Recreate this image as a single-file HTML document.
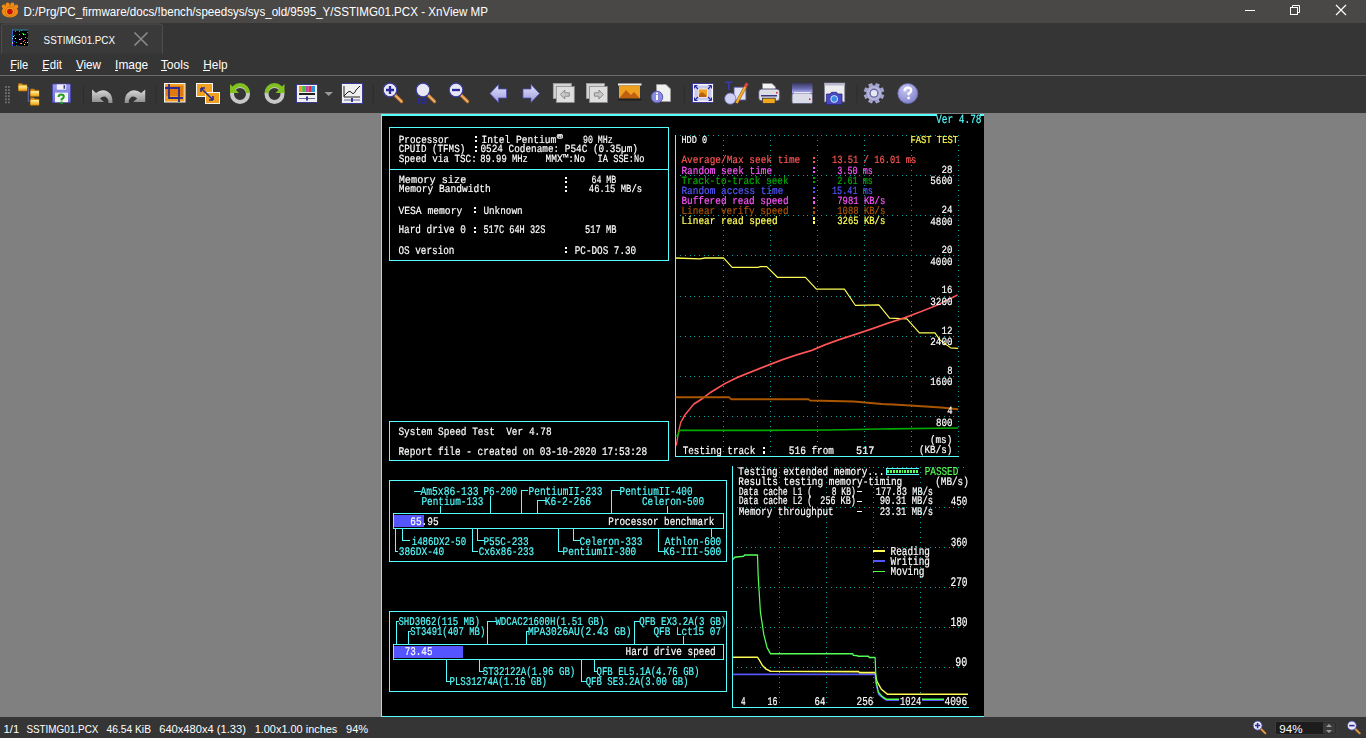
<!DOCTYPE html>
<html><head><meta charset="utf-8">
<style>
html,body{margin:0;padding:0;width:1366px;height:738px;overflow:hidden;background:#353535;}
#root{position:relative;width:1366px;height:738px;}
svg text{font-family:"Liberation Sans",sans-serif;}
#pcx text{font-family:"Liberation Mono",monospace;white-space:pre;stroke-width:0.15px;text-rendering:geometricPrecision;}
</style></head><body><div id="root">
<svg width="1366" height="738" viewBox="0 0 1366 738" style="position:absolute;left:0;top:0">
<!-- title bar -->
<rect x="0" y="0" width="1366" height="23" fill="#4a4846"/>
<rect x="0" y="23" width="1366" height="90" fill="#353535"/>
<!-- logo -->
<g>
 <g fill="#f28a12">
  <circle cx="3.8" cy="6.6" r="2"/><circle cx="7.6" cy="4.4" r="2"/><circle cx="12.3" cy="4.4" r="2"/><circle cx="16.2" cy="6.6" r="2"/>
  <ellipse cx="9.9" cy="11.4" rx="8.1" ry="6.2"/>
 </g>
 <circle cx="9.9" cy="11.6" r="4.6" fill="#f7a21c" stroke="#a85a10" stroke-width="0.6"/>
 <circle cx="9.9" cy="11.6" r="2.9" fill="#c80e0a"/>
</g>
<text x="23.5" y="16.3" font-size="13" fill="#ffffff" textLength="464.5" lengthAdjust="spacingAndGlyphs">D:/Prg/PC_firmware/docs/!bench/speedsys/sys_old/9595_Y/SSTIMG01.PCX - XnView MP</text>
<!-- window controls -->
<rect x="1245" y="10" width="10" height="1" fill="#fff"/>
<g fill="none" stroke="#fff" stroke-width="1">
 <rect x="1290.5" y="7.5" width="7" height="7"/>
 <path d="M1292.5 7.5 V5.5 H1299.5 V12.5 H1297.5"/>
 <path d="M1336 5 L1346 15 M1346 5 L1336 15" stroke-width="1.2"/>
</g>
<!-- tab -->
<path d="M1.5 53.5 V26.5 Q1.5 24 4 24 H160 Q162.5 24 162.5 26.5 V53.5" fill="#3a3a3a" stroke="#4e4e4e"/>
<rect x="12" y="29.5" width="16" height="16.5" fill="#000"/>
<rect x="12" y="29.5" width="16" height="1" fill="#3aa0c0"/>
<rect x="12" y="29.5" width="1" height="16.5" fill="#3a60c0"/>
<rect x="19" y="34" width="1" height="1" fill="#ff55ff"/>
<rect x="27" y="32" width="1" height="1" fill="#00aaaa"/>
<rect x="27" y="38" width="1" height="1" fill="#00aa00"/>
<rect x="18" y="45" width="1" height="1" fill="#0000aa"/>
<rect x="24" y="34" width="1" height="1" fill="#00aa00"/>
<rect x="16" y="42" width="1" height="1" fill="#00aaaa"/>
<rect x="14" y="35" width="1" height="1" fill="#00aaaa"/>
<rect x="21" y="30" width="1" height="1" fill="#ff5555"/>
<rect x="27" y="42" width="1" height="1" fill="#ffff55"/>
<rect x="24" y="44" width="1" height="1" fill="#55ffff"/>
<rect x="23" y="33" width="1" height="1" fill="#00aaaa"/>
<rect x="16" y="45" width="1" height="1" fill="#00aa00"/>
<rect x="20" y="43" width="1" height="1" fill="#ff5555"/>
<rect x="25" y="42" width="1" height="1" fill="#ff55ff"/>
<rect x="25" y="37" width="1" height="1" fill="#ff55ff"/>
<rect x="12" y="38" width="1" height="1" fill="#55ffff"/>
<rect x="22" y="33" width="1" height="1" fill="#00aa00"/>
<rect x="20" y="39" width="1" height="1" fill="#5555ff"/>
<rect x="14" y="45" width="1" height="1" fill="#0000aa"/>
<rect x="14" y="41" width="1" height="1" fill="#5555ff"/>
<rect x="25" y="34" width="1" height="1" fill="#00aaaa"/>
<rect x="21" y="43" width="1" height="1" fill="#ffff55"/>
<rect x="15" y="31" width="1" height="1" fill="#00aaaa"/>
<rect x="24" y="40" width="1" height="1" fill="#ff5555"/>
<rect x="19" y="31" width="1" height="1" fill="#ff5555"/>
<rect x="12" y="32" width="1" height="1" fill="#5555ff"/>
<rect x="13" y="36" width="1" height="1" fill="#ffff55"/>
<rect x="21" y="38" width="1" height="1" fill="#55ffff"/>
<rect x="13" y="40" width="1" height="1" fill="#ff55ff"/>
<rect x="23" y="34" width="1" height="1" fill="#ffff55"/>
<rect x="24" y="44" width="1" height="1" fill="#ffff55"/>
<rect x="15" y="38" width="1" height="1" fill="#ffff55"/>
<rect x="19" y="39" width="1" height="1" fill="#ffff55"/>
<rect x="20" y="39" width="1" height="1" fill="#ff55ff"/>
<rect x="12" y="43" width="1" height="1" fill="#ff55ff"/>
<rect x="12" y="42" width="1" height="1" fill="#55ffff"/>
<rect x="13" y="40" width="1" height="1" fill="#0000aa"/>
<rect x="23" y="41" width="1" height="1" fill="#ff5555"/>
<text x="43.6" y="43.8" font-size="10.6" fill="#ffffff" textLength="71.4" lengthAdjust="spacingAndGlyphs">SSTIMG01.PCX</text>
<path d="M134.5 32.5 L147.5 45.5 M147.5 32.5 L134.5 45.5" stroke="#8a8a8a" stroke-width="1.6"/>
<!-- menu -->
<g font-size="13" fill="#ffffff">
<text x="10.2" y="69" textLength="17.9" lengthAdjust="spacingAndGlyphs">File</text>
<text x="42.2" y="69" textLength="19.7" lengthAdjust="spacingAndGlyphs">Edit</text>
<text x="75.9" y="69" textLength="25.1" lengthAdjust="spacingAndGlyphs">View</text>
<text x="115.1" y="69" textLength="33.1" lengthAdjust="spacingAndGlyphs">Image</text>
<text x="160.8" y="69" textLength="28.2" lengthAdjust="spacingAndGlyphs">Tools</text>
<text x="203.3" y="69" textLength="24.3" lengthAdjust="spacingAndGlyphs">Help</text>
</g>
<g fill="#ffffff">
<rect x="10" y="70" width="6" height="1"/><rect x="42" y="70" width="6" height="1"/><rect x="76" y="70" width="6" height="1"/>
<rect x="115" y="70" width="3" height="1"/><rect x="161" y="70" width="6" height="1"/><rect x="203" y="70" width="7" height="1"/>
</g>
<rect x="0" y="75" width="1366" height="1" fill="#6e6e6e"/>
<defs><linearGradient id="gfold" x1="0" y1="0" x2="0" y2="1"><stop offset="0" stop-color="#fff2a0"/><stop offset="1" stop-color="#f0a818"/></linearGradient><linearGradient id="gundo" x1="0" y1="0" x2="0" y2="1"><stop offset="0" stop-color="#d8d8d8"/><stop offset="1" stop-color="#8c8c8c"/></linearGradient><linearGradient id="gsave" x1="0" y1="0" x2="0" y2="1"><stop offset="0" stop-color="#9a9aee"/><stop offset="1" stop-color="#6a6ad8"/></linearGradient></defs>
<rect x="5" y="86.0" width="1.8" height="1.8" fill="#727272"/>
<rect x="8" y="86.0" width="1.8" height="1.8" fill="#727272"/>
<rect x="5" y="89.1" width="1.8" height="1.8" fill="#727272"/>
<rect x="8" y="89.1" width="1.8" height="1.8" fill="#727272"/>
<rect x="5" y="92.2" width="1.8" height="1.8" fill="#727272"/>
<rect x="8" y="92.2" width="1.8" height="1.8" fill="#727272"/>
<rect x="5" y="95.3" width="1.8" height="1.8" fill="#727272"/>
<rect x="8" y="95.3" width="1.8" height="1.8" fill="#727272"/>
<rect x="5" y="98.4" width="1.8" height="1.8" fill="#727272"/>
<rect x="8" y="98.4" width="1.8" height="1.8" fill="#727272"/>
<rect x="5" y="101.5" width="1.8" height="1.8" fill="#727272"/>
<rect x="8" y="101.5" width="1.8" height="1.8" fill="#727272"/>
<rect x="83" y="85.5" width="1" height="18" fill="#2c2c2c"/>
<rect x="155.5" y="85.5" width="1" height="18" fill="#2c2c2c"/>
<rect x="372.8" y="85.5" width="1" height="18" fill="#2c2c2c"/>
<rect x="683.8" y="85.5" width="1" height="18" fill="#2c2c2c"/>
<rect x="856.5" y="85.5" width="1" height="18" fill="#2c2c2c"/>
<path d="M28.3 87.5 V101.5 M26.5 87.5 H28.3 M28.3 93 H29.5 M28.3 101.3 H29.5" stroke="#6a70d0" stroke-width="0.9" fill="none"/>
<path d="M18.5 83.5 h3.5 l1 1.2 h4 v6.3 h-8.5 z" fill="#d89010" stroke="#a86a10" stroke-width="0.7"/><rect x="18.5" y="85.6" width="8.5" height="4.8" fill="url(#gfold)"/>
<path d="M30.5 89.0 h3.5 l1 1.2 h4 v6.3 h-8.5 z" fill="#d89010" stroke="#a86a10" stroke-width="0.7"/><rect x="30.5" y="91.1" width="8.5" height="4.8" fill="url(#gfold)"/>
<path d="M30.5 97.8 h3.5 l1 1.2 h4 v6.3 h-8.5 z" fill="#d89010" stroke="#a86a10" stroke-width="0.7"/><rect x="30.5" y="99.89999999999999" width="8.5" height="4.8" fill="url(#gfold)"/>
<path d="M52.5 85 Q52.5 84 53.5 84 H69.5 Q70.5 84 70.5 85 V102.5 H52.5 Z" fill="url(#gsave)" stroke="#4848b0" stroke-width="0.8"/>
<rect x="56.8" y="84.4" width="9.4" height="5.3" fill="#f0f0f8"/><rect x="63.5" y="85.2" width="1.6" height="3.6" fill="#404080"/>
<rect x="55" y="92.6" width="13" height="9.6" fill="#f4f4f4"/>
<path d="M58.6 97 Q58.6 94.5 61.2 94.5 Q63.8 94.5 63.8 96.8 Q63.8 98.3 61.6 99.2 V100.4" fill="none" stroke="#20a020" stroke-width="2"/><rect x="60.5" y="101.6" width="2.3" height="2.3" fill="#20a020"/>
<path d="M92 89.5 L92 102 L104 102 L100 98.5 Q104 95 107 98 Q109 100 108.5 103 L112.5 103 Q113 95 107.5 91.5 Q101.5 88.5 96 93 Z" fill="url(#gundo)"/>
<path d="M145.2 89.5 L145.2 102 L133.2 102 L137.2 98.5 Q133.2 95 130.2 98 Q128.2 100 128.7 103 L124.7 103 Q124.2 95 129.7 91.5 Q135.7 88.5 141.2 93 Z" fill="url(#gundo)"/>
<rect x="164.5" y="83.5" width="20.5" height="18.5" fill="#f0a020" stroke="#f4f4f4"/>
<rect x="166" y="86" width="17" height="10" fill="#e07a10"/>
<path d="M169 84 V98 H183 M165 88 H179 V102" stroke="#2a2a90" stroke-width="1.8" fill="none"/>
<rect x="196.5" y="83.5" width="16" height="13" fill="#f0a020" stroke="#f4f4f4"/>
<rect x="205.5" y="92.5" width="14" height="11" fill="#f0a020" stroke="#f4f4f4"/>
<path d="M201 88 L213 100 M201 88 h4 M201 88 v4 M213 100 h-4 M213 100 v-4" stroke="#2a2a90" stroke-width="1.6"/>
<circle cx="240" cy="94" r="8" fill="none" stroke="#c8c8c8" stroke-width="4"/>
<path d="M232 93 A8 8 0 0 1 248 93" fill="none" stroke="#80c020" stroke-width="4"/>
<path d="M230 84 L230 93 L239 93 Z" fill="#80c020"/>
<circle cx="274.5" cy="94" r="8" fill="none" stroke="#c8c8c8" stroke-width="4"/>
<path d="M266.5 93 A8 8 0 0 1 282.5 93" fill="none" stroke="#80c020" stroke-width="4"/>
<path d="M284.5 84 L284.5 93 L275.5 93 Z" fill="#80c020"/>
<rect x="296.5" y="84.5" width="21" height="18" fill="#f0f0f0" stroke="#3a3a90"/>
<rect x="299.0" y="86" width="3.2" height="6" fill="#f0a020"/>
<rect x="302.2" y="86" width="3.2" height="6" fill="#40c040"/>
<rect x="305.4" y="86" width="3.2" height="6" fill="#c040c0"/>
<rect x="308.6" y="86" width="3.2" height="6" fill="#e03030"/>
<rect x="311.8" y="86" width="3.2" height="6" fill="#3090e0"/>
<rect x="299" y="93" width="16" height="2" fill="#202020"/>
<rect x="299" y="98" width="16" height="1" fill="#6a6a9a"/><rect x="306" y="96.5" width="2" height="4" fill="#3a3a90"/>
<path d="M324.5 92 L333 92 L328.75 96 Z" fill="#9a9a9a"/>
<rect x="341.5" y="83.5" width="21" height="20" fill="#f0f0f0" stroke="#3a3a90"/>
<path d="M344 96 L348 92 Q350 90 352 93 Q354 95 356 90 L360 86 M344 86 V97 H360" stroke="#202020" fill="none"/>
<rect x="344" y="99.5" width="16" height="1" fill="#6a6a9a"/><rect x="351" y="98" width="2" height="4" fill="#3a3a90"/>
<g>
<path d="M394.20000000000005 94.19999999999999 L401.55 101.55" stroke="#c8782a" stroke-width="3.3600000000000003" stroke-linecap="round"/>
<path d="M394.20000000000005 94.19999999999999 L401.55 101.55" stroke="#f0c080" stroke-width="1.26" stroke-linecap="round"/>
<circle cx="390.0" cy="90.0" r="6.825" fill="#e8e8f4" stroke="#3a3aa0" stroke-width="1.26"/>
<path d="M386.01000000000005 90.0 H393.99 M390.0 86.00999999999999 V93.99" stroke="#2a2a9a" stroke-width="2.3100000000000005"/>
</g>
<g>
<path d="M427.20000000000005 94.19999999999999 L434.55 101.55" stroke="#c8782a" stroke-width="3.3600000000000003" stroke-linecap="round"/>
<path d="M427.20000000000005 94.19999999999999 L434.55 101.55" stroke="#f0c080" stroke-width="1.26" stroke-linecap="round"/>
<circle cx="423.0" cy="90.0" r="6.825" fill="#e8e8f4" stroke="#3a3aa0" stroke-width="1.26"/>

</g>
<path d="M418.2 98 h2 v5.8 h-2 z M417 99 l1.2 -1 v1.6 z M421.4 99.6 h1.6 v1.5 h-1.6 z M421.4 102.3 h1.6 v1.5 h-1.6 z M424.4 98 h2 v5.8 h-2 z M423.2 99 l1.2 -1 v1.6 z" fill="#2a2aa8"/>
<g>
<path d="M460.20000000000005 94.19999999999999 L467.55 101.55" stroke="#c8782a" stroke-width="3.3600000000000003" stroke-linecap="round"/>
<path d="M460.20000000000005 94.19999999999999 L467.55 101.55" stroke="#f0c080" stroke-width="1.26" stroke-linecap="round"/>
<circle cx="456.0" cy="90.0" r="6.825" fill="#e8e8f4" stroke="#3a3aa0" stroke-width="1.26"/>
<path d="M452.01000000000005 90.0 H459.99" stroke="#2a2a9a" stroke-width="2.3100000000000005"/>
</g>
<defs><linearGradient id="garr" x1="0" y1="0" x2="0" y2="1"><stop offset="0" stop-color="#e4e4fa"/><stop offset="1" stop-color="#9a9ae0"/></linearGradient></defs>
<path d="M490 93.5 L498.5 84.5 V89 H506.5 V98 H498.5 V102.5 Z" fill="url(#garr)" stroke="#5050b0" stroke-width="0.8"/>
<path d="M539.5 93.5 L531 84.5 V89 H523 V98 H531 V102.5 Z" fill="url(#garr)" stroke="#5050b0" stroke-width="0.8"/>
<rect x="553.3" y="83.5" width="18" height="15" fill="#d4d4d4" stroke="#a0a0a0" stroke-width="0.8"/>
<rect x="556.3" y="86.5" width="18" height="16" fill="#dedede" stroke="#8a8a8a" stroke-width="0.8"/>
<path d="M560.3 94.5 L564.8 90 V92.8 H569.3 V96.2 H564.8 V99 Z" fill="#c8c8c8" stroke="#7a7a7a" stroke-width="0.8"/>
<rect x="586.4" y="83.5" width="18" height="15" fill="#d4d4d4" stroke="#a0a0a0" stroke-width="0.8"/>
<rect x="589.4" y="86.5" width="18" height="16" fill="#dedede" stroke="#8a8a8a" stroke-width="0.8"/>
<path d="M603.4 94.5 L598.9 90 V92.8 H594.4 V96.2 H598.9 V99 Z" fill="#c8c8c8" stroke="#7a7a7a" stroke-width="0.8"/>
<rect x="618" y="83.5" width="23.5" height="2" fill="#f0f0f0"/>
<rect x="619" y="85.5" width="21" height="13" fill="#f0a020"/>
<path d="M619 98.5 L626 90 L631 95 L634 92 L640 98.5 Z" fill="#c06010"/>
<rect x="618" y="98.5" width="23.5" height="2" fill="#202020"/>
<path d="M656.5 84.5 H666 L670.5 89 V101.5 H656.5 Z" fill="#f0f0f0" stroke="#9a9a9a"/>
<circle cx="657" cy="97" r="5.8" fill="#8a8ae0" stroke="#5a5ab0"/>
<rect x="656" y="95" width="2" height="5" fill="#fff"/><rect x="656" y="92.5" width="2" height="1.6" fill="#fff"/>
<rect x="692.5" y="83.5" width="21" height="19" fill="#f8f8f8" stroke="#3a3a98"/>
<rect x="694.5" y="85.5" width="17" height="15" fill="#c8c8f0"/>
<rect x="698.3" y="89" width="9.2" height="8.2" fill="#f0a020" stroke="#f8f8f8" stroke-width="0.8"/>
<path d="M699 94.5 L702 92 L706 95 V97 H699Z" fill="#b86010"/>
<path d="M695 86 L698 89 M711 86 L708 89 M695 100 L698 97 M711 100 L708 97" stroke="#2a2aa0" stroke-width="1.2"/>
<path d="M694.5 85.5 h3 M694.5 85.5 v3 M711.5 85.5 h-3 M711.5 85.5 v3 M694.5 100.5 h3 M694.5 100.5 v-3 M711.5 100.5 h-3 M711.5 100.5 v-3" stroke="#2a2aa0" stroke-width="1"/>
<rect x="734" y="87.2" width="11.9" height="12.8" fill="#e0e0f8" stroke="#5a5ab0" stroke-width="0.8"/>
<circle cx="730.3" cy="98.6" r="5.6" fill="#d0d0f4" stroke="#6a6ac0" stroke-width="0.8"/>
<path d="M725 82.2 H732.5 M728.75 82.2 V89.9" stroke="#3a3aa8" stroke-width="1.6"/>
<path d="M736.5 103 L745.5 86.5" stroke="#a06010" stroke-width="3.2"/><path d="M736.5 103 L745.5 86.5" stroke="#f0b030" stroke-width="2"/><path d="M745 87 L747.3 83.2" stroke="#e04040" stroke-width="3"/>
<path d="M762.5 83.5 H772 L775.5 87 V91 H762.5 Z" fill="#f4f4f4" stroke="#8a8a8a" stroke-width="0.8"/>
<rect x="758.7" y="89" width="21" height="11.9" rx="3" fill="#dcdce4" stroke="#4a4a6a" stroke-width="0.9"/>
<rect x="761" y="95" width="16" height="1.5" fill="#3a3a80"/>
<rect x="762.4" y="98.2" width="12.8" height="5.4" fill="#f0a818" stroke="#303030" stroke-width="0.8"/>
<rect x="776" y="92" width="1.5" height="1.5" fill="#d02020"/>
<defs><linearGradient id="gscan" x1="0" y1="0" x2="0" y2="1"><stop offset="0" stop-color="#383860"/><stop offset="0.5" stop-color="#6a6ab0"/><stop offset="1" stop-color="#c0c0ff"/></linearGradient></defs>
<rect x="792" y="83" width="20.5" height="11" rx="1" fill="url(#gscan)"/>
<rect x="792" y="93.5" width="20.5" height="10" rx="1.5" fill="#dcdce8" stroke="#5a5a7a" stroke-width="0.8"/>
<rect x="794" y="92" width="16.5" height="1.5" fill="#e8e8ff"/><rect x="809" y="98.5" width="1.5" height="1.5" fill="#d02020"/>
<rect x="824.6" y="83.1" width="20.1" height="18.7" fill="#ececec" stroke="#8a8a9a" stroke-width="0.8"/>
<rect x="824.6" y="83.1" width="20.1" height="2.4" fill="#b8b8d0"/>
<path d="M826.4 94 H830 L831.5 92.3 H836.5 L838 94 H842 V104.5 H826.4 Z" fill="#4848c0" stroke="#2a2a80" stroke-width="0.8"/>
<circle cx="834.2" cy="99" r="3.4" fill="#3a8ae0" stroke="#e8e8ff" stroke-width="0.9"/>
<rect x="871.9" y="82.9" width="4.2" height="4" fill="#a6a6d2" transform="rotate(22.5 874 93.2)"/>
<rect x="871.9" y="82.9" width="4.2" height="4" fill="#a6a6d2" transform="rotate(67.5 874 93.2)"/>
<rect x="871.9" y="82.9" width="4.2" height="4" fill="#a6a6d2" transform="rotate(112.5 874 93.2)"/>
<rect x="871.9" y="82.9" width="4.2" height="4" fill="#a6a6d2" transform="rotate(157.5 874 93.2)"/>
<rect x="871.9" y="82.9" width="4.2" height="4" fill="#a6a6d2" transform="rotate(202.5 874 93.2)"/>
<rect x="871.9" y="82.9" width="4.2" height="4" fill="#a6a6d2" transform="rotate(247.5 874 93.2)"/>
<rect x="871.9" y="82.9" width="4.2" height="4" fill="#a6a6d2" transform="rotate(292.5 874 93.2)"/>
<rect x="871.9" y="82.9" width="4.2" height="4" fill="#a6a6d2" transform="rotate(337.5 874 93.2)"/>
<circle cx="874" cy="93.2" r="7.6" fill="#b4b4dc" stroke="#8888bb" stroke-width="0.6"/><circle cx="874" cy="93.2" r="4.6" fill="#6a6aa0"/><circle cx="874" cy="93.2" r="3.2" fill="#e8e8f4"/>
<defs><radialGradient id="ghelp" cx="0.4" cy="0.3" r="0.8"><stop offset="0" stop-color="#c8c8f4"/><stop offset="1" stop-color="#7a7ac8"/></radialGradient></defs>
<circle cx="907.8" cy="93.5" r="10" fill="url(#ghelp)" stroke="#6a6ab0" stroke-width="0.8"/>
<path d="M904.6 91.2 Q904.6 87.6 907.9 87.6 Q911.2 87.6 911.2 90.6 Q911.2 92.3 908.6 93.5 V95.2" fill="none" stroke="#ffffff" stroke-width="2.2"/><rect x="907.4" y="96.8" width="2.4" height="2.4" fill="#fff"/>
<!-- canvas -->
<rect x="0" y="113" width="1366" height="604" fill="#808080"/>
<!-- status bar -->
<rect x="0" y="717" width="1366" height="21" fill="#353535"/>
<g font-size="10.8" fill="#ffffff">
<text x="3.5" y="733.4" textLength="15.8" lengthAdjust="spacingAndGlyphs">1/1</text>
<text x="26.4" y="733.4" textLength="72" lengthAdjust="spacingAndGlyphs">SSTIMG01.PCX</text>
<text x="106.5" y="733.4" textLength="44.5" lengthAdjust="spacingAndGlyphs">46.54 KiB</text>
<text x="159.2" y="733.4" textLength="86.8" lengthAdjust="spacingAndGlyphs">640x480x4 (1.33)</text>
<text x="254.7" y="733.4" textLength="82.6" lengthAdjust="spacingAndGlyphs">1.00x1.00 inches</text>
<text x="346" y="733.4" textLength="22.2" lengthAdjust="spacingAndGlyphs">94%</text>
</g>
<rect x="1275.5" y="721.5" width="60.5" height="13" rx="2" fill="#1c1c1c" stroke="#3c3c3c"/>
<text x="1279.3" y="733" font-size="10.8" fill="#ffffff" textLength="23.2" lengthAdjust="spacingAndGlyphs">94%</text>
<rect x="1323" y="722.5" width="12" height="11" fill="#3a3a3a"/>
<path d="M1326 727 L1329 724 L1332 727 Z M1326 730 L1329 733 L1332 730 Z" fill="#9a9a9a"/>
<g>
<path d="M1260.4 728.4 L1265.3 733.3" stroke="#c8782a" stroke-width="2.2399999999999998" stroke-linecap="round"/>
<path d="M1260.4 728.4 L1265.3 733.3" stroke="#f0c080" stroke-width="0.84" stroke-linecap="round"/>
<circle cx="1257.6" cy="725.6" r="4.55" fill="#e8e8f4" stroke="#3a3aa0" stroke-width="0.84"/>
<path d="M1254.94 725.6 H1260.26 M1257.6 722.94 V728.26" stroke="#2a2a9a" stroke-width="1.54"/>
</g>
<g>
<path d="M1354.7 728.4 L1359.6 733.3" stroke="#c8782a" stroke-width="2.2399999999999998" stroke-linecap="round"/>
<path d="M1354.7 728.4 L1359.6 733.3" stroke="#f0c080" stroke-width="0.84" stroke-linecap="round"/>
<circle cx="1351.8999999999999" cy="725.6" r="4.55" fill="#e8e8f4" stroke="#3a3aa0" stroke-width="0.84"/>
<path d="M1349.24 725.6 H1354.56" stroke="#2a2a9a" stroke-width="1.54"/>
</g>
</svg>
<svg width="603" height="603" viewBox="381 114 603 603" style="position:absolute;left:381px;top:114px;will-change:transform">
<rect x="381" y="114" width="603" height="603" fill="#000"/>
<g shape-rendering="crispEdges">
<rect x="381" y="114" width="603" height="2" fill="#55FFFF"/>
<rect x="381" y="114" width="1" height="603" fill="#55FFFF"/>
<rect x="381" y="716" width="603" height="1" fill="#55FFFF"/>
<rect x="389" y="127" width="280" height="1" fill="#55FFFF"/>
<rect x="389" y="260" width="280" height="1" fill="#55FFFF"/>
<rect x="389" y="127" width="1" height="134" fill="#55FFFF"/>
<rect x="668" y="127" width="1" height="134" fill="#55FFFF"/>
<rect x="389" y="169" width="280" height="1" fill="#55FFFF"/>
<rect x="389" y="421" width="280" height="1" fill="#55FFFF"/>
<rect x="389" y="460" width="280" height="1" fill="#55FFFF"/>
<rect x="389" y="421" width="1" height="40" fill="#55FFFF"/>
<rect x="668" y="421" width="1" height="40" fill="#55FFFF"/>
<rect x="389" y="480" width="338" height="1" fill="#55FFFF"/>
<rect x="389" y="561" width="338" height="1" fill="#55FFFF"/>
<rect x="389" y="480" width="1" height="82" fill="#55FFFF"/>
<rect x="726" y="480" width="1" height="82" fill="#55FFFF"/>
<rect x="393" y="513" width="331" height="1" fill="#55FFFF"/>
<rect x="393" y="528" width="331" height="1" fill="#55FFFF"/>
<rect x="393" y="513" width="1" height="16" fill="#55FFFF"/>
<rect x="723" y="513" width="1" height="16" fill="#55FFFF"/>
<rect x="389" y="611" width="338" height="1" fill="#55FFFF"/>
<rect x="389" y="691" width="338" height="1" fill="#55FFFF"/>
<rect x="389" y="611" width="1" height="81" fill="#55FFFF"/>
<rect x="726" y="611" width="1" height="81" fill="#55FFFF"/>
<rect x="393" y="644" width="331" height="1" fill="#55FFFF"/>
<rect x="393" y="659" width="331" height="1" fill="#55FFFF"/>
<rect x="393" y="644" width="1" height="16" fill="#55FFFF"/>
<rect x="723" y="644" width="1" height="16" fill="#55FFFF"/>
<rect x="394" y="514.7" width="30" height="12.3" fill="#5555FF"/>
<rect x="394" y="645.7" width="69" height="12.3" fill="#5555FF"/>
<rect x="937" y="114" width="43" height="2" fill="#000000"/>
<rect x="675" y="135" width="1" height="322" fill="#55FFFF"/>
<rect x="675" y="456" width="284" height="1" fill="#55FFFF"/>
<rect x="414" y="491" width="7" height="1" fill="#55FFFF"/>
<rect x="440" y="506" width="1" height="8" fill="#55FFFF"/>
<rect x="490" y="496" width="1" height="18" fill="#55FFFF"/>
<rect x="521" y="490" width="1" height="24" fill="#55FFFF"/>
<rect x="521" y="490" width="7" height="1" fill="#55FFFF"/>
<rect x="537" y="500" width="1" height="14" fill="#55FFFF"/>
<rect x="537" y="500" width="9" height="1" fill="#55FFFF"/>
<rect x="611" y="490" width="1" height="24" fill="#55FFFF"/>
<rect x="611" y="490" width="9" height="1" fill="#55FFFF"/>
<rect x="667" y="506" width="1" height="8" fill="#55FFFF"/>
<rect x="395" y="528" width="1" height="24" fill="#55FFFF"/>
<rect x="395" y="551" width="3" height="1" fill="#55FFFF"/>
<rect x="402" y="528" width="1" height="13" fill="#55FFFF"/>
<rect x="402" y="540" width="8" height="1" fill="#55FFFF"/>
<rect x="472" y="528" width="1" height="24" fill="#55FFFF"/>
<rect x="472" y="551" width="6" height="1" fill="#55FFFF"/>
<rect x="477" y="528" width="1" height="13" fill="#55FFFF"/>
<rect x="477" y="540" width="7" height="1" fill="#55FFFF"/>
<rect x="558" y="528" width="1" height="24" fill="#55FFFF"/>
<rect x="558" y="551" width="5" height="1" fill="#55FFFF"/>
<rect x="573" y="528" width="1" height="13" fill="#55FFFF"/>
<rect x="573" y="540" width="7" height="1" fill="#55FFFF"/>
<rect x="658" y="528" width="1" height="24" fill="#55FFFF"/>
<rect x="658" y="551" width="6" height="1" fill="#55FFFF"/>
<rect x="711" y="528" width="1" height="9" fill="#55FFFF"/>
<rect x="396" y="621" width="1" height="24" fill="#55FFFF"/>
<rect x="396" y="621" width="3" height="1" fill="#55FFFF"/>
<rect x="408" y="631" width="1" height="14" fill="#55FFFF"/>
<rect x="408" y="631" width="3" height="1" fill="#55FFFF"/>
<rect x="487" y="621" width="1" height="24" fill="#55FFFF"/>
<rect x="487" y="621" width="9" height="1" fill="#55FFFF"/>
<rect x="526" y="631" width="1" height="14" fill="#55FFFF"/>
<rect x="526" y="631" width="3" height="1" fill="#55FFFF"/>
<rect x="634" y="621" width="1" height="24" fill="#55FFFF"/>
<rect x="634" y="621" width="6" height="1" fill="#55FFFF"/>
<rect x="683" y="636" width="1" height="9" fill="#55FFFF"/>
<rect x="446" y="659" width="1" height="23" fill="#55FFFF"/>
<rect x="446" y="681" width="4" height="1" fill="#55FFFF"/>
<rect x="479" y="659" width="1" height="13" fill="#55FFFF"/>
<rect x="479" y="671" width="5" height="1" fill="#55FFFF"/>
<rect x="581" y="659" width="1" height="23" fill="#55FFFF"/>
<rect x="581" y="681" width="6" height="1" fill="#55FFFF"/>
<rect x="594" y="659" width="1" height="13" fill="#55FFFF"/>
<rect x="594" y="671" width="3" height="1" fill="#55FFFF"/>
<rect x="732" y="466" width="1" height="242" fill="#55FFFF"/>
<rect x="732" y="707" width="237" height="1" fill="#55FFFF"/>
<rect x="873" y="550" width="12" height="2" fill="#FFFF55"/>
<rect x="873" y="560" width="12" height="2" fill="#5555FF"/>
<rect x="873" y="571" width="12" height="1" fill="#55FF55"/>
<rect x="857" y="491" width="5" height="1" fill="#FFFFFF"/>
<rect x="857" y="501" width="5" height="1" fill="#FFFFFF"/>
<rect x="857" y="511" width="5" height="1" fill="#FFFFFF"/>
<rect x="886" y="468" width="33" height="1" fill="#55FFFF"/>
<rect x="886" y="474" width="33" height="1" fill="#55FFFF"/>
<rect x="886" y="468" width="1" height="7" fill="#55FFFF"/>
<rect x="887" y="470" width="2" height="3" fill="#55FF55"/>
<rect x="890" y="470" width="2" height="3" fill="#55FF55"/>
<rect x="893" y="470" width="2" height="3" fill="#55FF55"/>
<rect x="896" y="470" width="2" height="3" fill="#55FF55"/>
<rect x="899" y="470" width="2" height="3" fill="#55FF55"/>
<rect x="902" y="470" width="1" height="3" fill="#55FF55"/>
<rect x="904" y="470" width="2" height="3" fill="#55FF55"/>
<rect x="907" y="470" width="2" height="3" fill="#55FF55"/>
<rect x="910" y="470" width="2" height="3" fill="#55FF55"/>
<rect x="913" y="470" width="2" height="3" fill="#55FF55"/>
<rect x="916" y="470" width="2" height="3" fill="#55FF55"/>
<path fill="#00AAAA" d="M680 135h1v1h-1zM685 135h1v1h-1zM690 135h1v1h-1zM694 135h1v1h-1zM699 135h1v1h-1zM704 135h1v1h-1zM708 135h1v1h-1zM713 135h1v1h-1zM718 135h1v1h-1zM723 135h1v1h-1zM727 135h1v1h-1zM732 135h1v1h-1zM737 135h1v1h-1zM741 135h1v1h-1zM746 135h1v1h-1zM751 135h1v1h-1zM755 135h1v1h-1zM760 135h1v1h-1zM765 135h1v1h-1zM770 135h1v1h-1zM774 135h1v1h-1zM779 135h1v1h-1zM784 135h1v1h-1zM788 135h1v1h-1zM793 135h1v1h-1zM798 135h1v1h-1zM803 135h1v1h-1zM807 135h1v1h-1zM812 135h1v1h-1zM817 135h1v1h-1zM821 135h1v1h-1zM826 135h1v1h-1zM831 135h1v1h-1zM836 135h1v1h-1zM840 135h1v1h-1zM845 135h1v1h-1zM850 135h1v1h-1zM854 135h1v1h-1zM859 135h1v1h-1zM864 135h1v1h-1zM869 135h1v1h-1zM873 135h1v1h-1zM878 135h1v1h-1zM883 135h1v1h-1zM887 135h1v1h-1zM892 135h1v1h-1zM897 135h1v1h-1zM902 135h1v1h-1zM906 135h1v1h-1zM911 135h1v1h-1zM916 135h1v1h-1zM920 135h1v1h-1zM925 135h1v1h-1zM930 135h1v1h-1zM935 135h1v1h-1zM939 135h1v1h-1zM944 135h1v1h-1zM949 135h1v1h-1zM953 135h1v1h-1zM958 135h1v1h-1zM680 175h1v1h-1zM685 175h1v1h-1zM690 175h1v1h-1zM694 175h1v1h-1zM699 175h1v1h-1zM704 175h1v1h-1zM708 175h1v1h-1zM713 175h1v1h-1zM718 175h1v1h-1zM723 175h1v1h-1zM727 175h1v1h-1zM732 175h1v1h-1zM737 175h1v1h-1zM741 175h1v1h-1zM746 175h1v1h-1zM751 175h1v1h-1zM755 175h1v1h-1zM760 175h1v1h-1zM765 175h1v1h-1zM770 175h1v1h-1zM774 175h1v1h-1zM779 175h1v1h-1zM784 175h1v1h-1zM788 175h1v1h-1zM793 175h1v1h-1zM798 175h1v1h-1zM803 175h1v1h-1zM807 175h1v1h-1zM812 175h1v1h-1zM817 175h1v1h-1zM821 175h1v1h-1zM826 175h1v1h-1zM831 175h1v1h-1zM836 175h1v1h-1zM840 175h1v1h-1zM845 175h1v1h-1zM850 175h1v1h-1zM854 175h1v1h-1zM859 175h1v1h-1zM864 175h1v1h-1zM869 175h1v1h-1zM873 175h1v1h-1zM878 175h1v1h-1zM883 175h1v1h-1zM887 175h1v1h-1zM892 175h1v1h-1zM897 175h1v1h-1zM902 175h1v1h-1zM906 175h1v1h-1zM911 175h1v1h-1zM916 175h1v1h-1zM920 175h1v1h-1zM925 175h1v1h-1zM930 175h1v1h-1zM935 175h1v1h-1zM939 175h1v1h-1zM944 175h1v1h-1zM949 175h1v1h-1zM953 175h1v1h-1zM958 175h1v1h-1zM680 215h1v1h-1zM685 215h1v1h-1zM690 215h1v1h-1zM694 215h1v1h-1zM699 215h1v1h-1zM704 215h1v1h-1zM708 215h1v1h-1zM713 215h1v1h-1zM718 215h1v1h-1zM723 215h1v1h-1zM727 215h1v1h-1zM732 215h1v1h-1zM737 215h1v1h-1zM741 215h1v1h-1zM746 215h1v1h-1zM751 215h1v1h-1zM755 215h1v1h-1zM760 215h1v1h-1zM765 215h1v1h-1zM770 215h1v1h-1zM774 215h1v1h-1zM779 215h1v1h-1zM784 215h1v1h-1zM788 215h1v1h-1zM793 215h1v1h-1zM798 215h1v1h-1zM803 215h1v1h-1zM807 215h1v1h-1zM812 215h1v1h-1zM817 215h1v1h-1zM821 215h1v1h-1zM826 215h1v1h-1zM831 215h1v1h-1zM836 215h1v1h-1zM840 215h1v1h-1zM845 215h1v1h-1zM850 215h1v1h-1zM854 215h1v1h-1zM859 215h1v1h-1zM864 215h1v1h-1zM869 215h1v1h-1zM873 215h1v1h-1zM878 215h1v1h-1zM883 215h1v1h-1zM887 215h1v1h-1zM892 215h1v1h-1zM897 215h1v1h-1zM902 215h1v1h-1zM906 215h1v1h-1zM911 215h1v1h-1zM916 215h1v1h-1zM920 215h1v1h-1zM925 215h1v1h-1zM930 215h1v1h-1zM935 215h1v1h-1zM939 215h1v1h-1zM944 215h1v1h-1zM949 215h1v1h-1zM953 215h1v1h-1zM958 215h1v1h-1zM680 255h1v1h-1zM685 255h1v1h-1zM690 255h1v1h-1zM694 255h1v1h-1zM699 255h1v1h-1zM704 255h1v1h-1zM708 255h1v1h-1zM713 255h1v1h-1zM718 255h1v1h-1zM723 255h1v1h-1zM727 255h1v1h-1zM732 255h1v1h-1zM737 255h1v1h-1zM741 255h1v1h-1zM746 255h1v1h-1zM751 255h1v1h-1zM755 255h1v1h-1zM760 255h1v1h-1zM765 255h1v1h-1zM770 255h1v1h-1zM774 255h1v1h-1zM779 255h1v1h-1zM784 255h1v1h-1zM788 255h1v1h-1zM793 255h1v1h-1zM798 255h1v1h-1zM803 255h1v1h-1zM807 255h1v1h-1zM812 255h1v1h-1zM817 255h1v1h-1zM821 255h1v1h-1zM826 255h1v1h-1zM831 255h1v1h-1zM836 255h1v1h-1zM840 255h1v1h-1zM845 255h1v1h-1zM850 255h1v1h-1zM854 255h1v1h-1zM859 255h1v1h-1zM864 255h1v1h-1zM869 255h1v1h-1zM873 255h1v1h-1zM878 255h1v1h-1zM883 255h1v1h-1zM887 255h1v1h-1zM892 255h1v1h-1zM897 255h1v1h-1zM902 255h1v1h-1zM906 255h1v1h-1zM911 255h1v1h-1zM916 255h1v1h-1zM920 255h1v1h-1zM925 255h1v1h-1zM930 255h1v1h-1zM935 255h1v1h-1zM939 255h1v1h-1zM944 255h1v1h-1zM949 255h1v1h-1zM953 255h1v1h-1zM958 255h1v1h-1zM680 296h1v1h-1zM685 296h1v1h-1zM690 296h1v1h-1zM694 296h1v1h-1zM699 296h1v1h-1zM704 296h1v1h-1zM708 296h1v1h-1zM713 296h1v1h-1zM718 296h1v1h-1zM723 296h1v1h-1zM727 296h1v1h-1zM732 296h1v1h-1zM737 296h1v1h-1zM741 296h1v1h-1zM746 296h1v1h-1zM751 296h1v1h-1zM755 296h1v1h-1zM760 296h1v1h-1zM765 296h1v1h-1zM770 296h1v1h-1zM774 296h1v1h-1zM779 296h1v1h-1zM784 296h1v1h-1zM788 296h1v1h-1zM793 296h1v1h-1zM798 296h1v1h-1zM803 296h1v1h-1zM807 296h1v1h-1zM812 296h1v1h-1zM817 296h1v1h-1zM821 296h1v1h-1zM826 296h1v1h-1zM831 296h1v1h-1zM836 296h1v1h-1zM840 296h1v1h-1zM845 296h1v1h-1zM850 296h1v1h-1zM854 296h1v1h-1zM859 296h1v1h-1zM864 296h1v1h-1zM869 296h1v1h-1zM873 296h1v1h-1zM878 296h1v1h-1zM883 296h1v1h-1zM887 296h1v1h-1zM892 296h1v1h-1zM897 296h1v1h-1zM902 296h1v1h-1zM906 296h1v1h-1zM911 296h1v1h-1zM916 296h1v1h-1zM920 296h1v1h-1zM925 296h1v1h-1zM930 296h1v1h-1zM935 296h1v1h-1zM939 296h1v1h-1zM944 296h1v1h-1zM949 296h1v1h-1zM953 296h1v1h-1zM958 296h1v1h-1zM680 336h1v1h-1zM685 336h1v1h-1zM690 336h1v1h-1zM694 336h1v1h-1zM699 336h1v1h-1zM704 336h1v1h-1zM708 336h1v1h-1zM713 336h1v1h-1zM718 336h1v1h-1zM723 336h1v1h-1zM727 336h1v1h-1zM732 336h1v1h-1zM737 336h1v1h-1zM741 336h1v1h-1zM746 336h1v1h-1zM751 336h1v1h-1zM755 336h1v1h-1zM760 336h1v1h-1zM765 336h1v1h-1zM770 336h1v1h-1zM774 336h1v1h-1zM779 336h1v1h-1zM784 336h1v1h-1zM788 336h1v1h-1zM793 336h1v1h-1zM798 336h1v1h-1zM803 336h1v1h-1zM807 336h1v1h-1zM812 336h1v1h-1zM817 336h1v1h-1zM821 336h1v1h-1zM826 336h1v1h-1zM831 336h1v1h-1zM836 336h1v1h-1zM840 336h1v1h-1zM845 336h1v1h-1zM850 336h1v1h-1zM854 336h1v1h-1zM859 336h1v1h-1zM864 336h1v1h-1zM869 336h1v1h-1zM873 336h1v1h-1zM878 336h1v1h-1zM883 336h1v1h-1zM887 336h1v1h-1zM892 336h1v1h-1zM897 336h1v1h-1zM902 336h1v1h-1zM906 336h1v1h-1zM911 336h1v1h-1zM916 336h1v1h-1zM920 336h1v1h-1zM925 336h1v1h-1zM930 336h1v1h-1zM935 336h1v1h-1zM939 336h1v1h-1zM944 336h1v1h-1zM949 336h1v1h-1zM953 336h1v1h-1zM958 336h1v1h-1zM680 376h1v1h-1zM685 376h1v1h-1zM690 376h1v1h-1zM694 376h1v1h-1zM699 376h1v1h-1zM704 376h1v1h-1zM708 376h1v1h-1zM713 376h1v1h-1zM718 376h1v1h-1zM723 376h1v1h-1zM727 376h1v1h-1zM732 376h1v1h-1zM737 376h1v1h-1zM741 376h1v1h-1zM746 376h1v1h-1zM751 376h1v1h-1zM755 376h1v1h-1zM760 376h1v1h-1zM765 376h1v1h-1zM770 376h1v1h-1zM774 376h1v1h-1zM779 376h1v1h-1zM784 376h1v1h-1zM788 376h1v1h-1zM793 376h1v1h-1zM798 376h1v1h-1zM803 376h1v1h-1zM807 376h1v1h-1zM812 376h1v1h-1zM817 376h1v1h-1zM821 376h1v1h-1zM826 376h1v1h-1zM831 376h1v1h-1zM836 376h1v1h-1zM840 376h1v1h-1zM845 376h1v1h-1zM850 376h1v1h-1zM854 376h1v1h-1zM859 376h1v1h-1zM864 376h1v1h-1zM869 376h1v1h-1zM873 376h1v1h-1zM878 376h1v1h-1zM883 376h1v1h-1zM887 376h1v1h-1zM892 376h1v1h-1zM897 376h1v1h-1zM902 376h1v1h-1zM906 376h1v1h-1zM911 376h1v1h-1zM916 376h1v1h-1zM920 376h1v1h-1zM925 376h1v1h-1zM930 376h1v1h-1zM935 376h1v1h-1zM939 376h1v1h-1zM944 376h1v1h-1zM949 376h1v1h-1zM953 376h1v1h-1zM958 376h1v1h-1zM680 416h1v1h-1zM685 416h1v1h-1zM690 416h1v1h-1zM694 416h1v1h-1zM699 416h1v1h-1zM704 416h1v1h-1zM708 416h1v1h-1zM713 416h1v1h-1zM718 416h1v1h-1zM723 416h1v1h-1zM727 416h1v1h-1zM732 416h1v1h-1zM737 416h1v1h-1zM741 416h1v1h-1zM746 416h1v1h-1zM751 416h1v1h-1zM755 416h1v1h-1zM760 416h1v1h-1zM765 416h1v1h-1zM770 416h1v1h-1zM774 416h1v1h-1zM779 416h1v1h-1zM784 416h1v1h-1zM788 416h1v1h-1zM793 416h1v1h-1zM798 416h1v1h-1zM803 416h1v1h-1zM807 416h1v1h-1zM812 416h1v1h-1zM817 416h1v1h-1zM821 416h1v1h-1zM826 416h1v1h-1zM831 416h1v1h-1zM836 416h1v1h-1zM840 416h1v1h-1zM845 416h1v1h-1zM850 416h1v1h-1zM854 416h1v1h-1zM859 416h1v1h-1zM864 416h1v1h-1zM869 416h1v1h-1zM873 416h1v1h-1zM878 416h1v1h-1zM883 416h1v1h-1zM887 416h1v1h-1zM892 416h1v1h-1zM897 416h1v1h-1zM902 416h1v1h-1zM906 416h1v1h-1zM911 416h1v1h-1zM916 416h1v1h-1zM920 416h1v1h-1zM925 416h1v1h-1zM930 416h1v1h-1zM935 416h1v1h-1zM939 416h1v1h-1zM944 416h1v1h-1zM949 416h1v1h-1zM953 416h1v1h-1zM958 416h1v1h-1zM723 135h1v1h-1zM723 140h1v1h-1zM723 145h1v1h-1zM723 150h1v1h-1zM723 155h1v1h-1zM723 160h1v1h-1zM723 165h1v1h-1zM723 170h1v1h-1zM723 175h1v1h-1zM723 180h1v1h-1zM723 185h1v1h-1zM723 190h1v1h-1zM723 195h1v1h-1zM723 200h1v1h-1zM723 205h1v1h-1zM723 210h1v1h-1zM723 215h1v1h-1zM723 220h1v1h-1zM723 225h1v1h-1zM723 230h1v1h-1zM723 235h1v1h-1zM723 240h1v1h-1zM723 245h1v1h-1zM723 250h1v1h-1zM723 255h1v1h-1zM723 260h1v1h-1zM723 265h1v1h-1zM723 270h1v1h-1zM723 276h1v1h-1zM723 281h1v1h-1zM723 286h1v1h-1zM723 291h1v1h-1zM723 296h1v1h-1zM723 301h1v1h-1zM723 306h1v1h-1zM723 311h1v1h-1zM723 316h1v1h-1zM723 321h1v1h-1zM723 326h1v1h-1zM723 331h1v1h-1zM723 336h1v1h-1zM723 341h1v1h-1zM723 346h1v1h-1zM723 351h1v1h-1zM723 356h1v1h-1zM723 361h1v1h-1zM723 366h1v1h-1zM723 371h1v1h-1zM723 376h1v1h-1zM723 381h1v1h-1zM723 386h1v1h-1zM723 391h1v1h-1zM723 396h1v1h-1zM723 401h1v1h-1zM723 406h1v1h-1zM723 411h1v1h-1zM723 416h1v1h-1zM723 421h1v1h-1zM723 426h1v1h-1zM723 431h1v1h-1zM723 436h1v1h-1zM723 441h1v1h-1zM723 446h1v1h-1zM723 451h1v1h-1zM770 135h1v1h-1zM770 140h1v1h-1zM770 145h1v1h-1zM770 150h1v1h-1zM770 155h1v1h-1zM770 160h1v1h-1zM770 165h1v1h-1zM770 170h1v1h-1zM770 175h1v1h-1zM770 180h1v1h-1zM770 185h1v1h-1zM770 190h1v1h-1zM770 195h1v1h-1zM770 200h1v1h-1zM770 205h1v1h-1zM770 210h1v1h-1zM770 215h1v1h-1zM770 220h1v1h-1zM770 225h1v1h-1zM770 230h1v1h-1zM770 235h1v1h-1zM770 240h1v1h-1zM770 245h1v1h-1zM770 250h1v1h-1zM770 255h1v1h-1zM770 260h1v1h-1zM770 265h1v1h-1zM770 270h1v1h-1zM770 276h1v1h-1zM770 281h1v1h-1zM770 286h1v1h-1zM770 291h1v1h-1zM770 296h1v1h-1zM770 301h1v1h-1zM770 306h1v1h-1zM770 311h1v1h-1zM770 316h1v1h-1zM770 321h1v1h-1zM770 326h1v1h-1zM770 331h1v1h-1zM770 336h1v1h-1zM770 341h1v1h-1zM770 346h1v1h-1zM770 351h1v1h-1zM770 356h1v1h-1zM770 361h1v1h-1zM770 366h1v1h-1zM770 371h1v1h-1zM770 376h1v1h-1zM770 381h1v1h-1zM770 386h1v1h-1zM770 391h1v1h-1zM770 396h1v1h-1zM770 401h1v1h-1zM770 406h1v1h-1zM770 411h1v1h-1zM770 416h1v1h-1zM770 421h1v1h-1zM770 426h1v1h-1zM770 431h1v1h-1zM770 436h1v1h-1zM770 441h1v1h-1zM770 446h1v1h-1zM770 451h1v1h-1zM817 135h1v1h-1zM817 140h1v1h-1zM817 145h1v1h-1zM817 150h1v1h-1zM817 155h1v1h-1zM817 160h1v1h-1zM817 165h1v1h-1zM817 170h1v1h-1zM817 175h1v1h-1zM817 180h1v1h-1zM817 185h1v1h-1zM817 190h1v1h-1zM817 195h1v1h-1zM817 200h1v1h-1zM817 205h1v1h-1zM817 210h1v1h-1zM817 215h1v1h-1zM817 220h1v1h-1zM817 225h1v1h-1zM817 230h1v1h-1zM817 235h1v1h-1zM817 240h1v1h-1zM817 245h1v1h-1zM817 250h1v1h-1zM817 255h1v1h-1zM817 260h1v1h-1zM817 265h1v1h-1zM817 270h1v1h-1zM817 276h1v1h-1zM817 281h1v1h-1zM817 286h1v1h-1zM817 291h1v1h-1zM817 296h1v1h-1zM817 301h1v1h-1zM817 306h1v1h-1zM817 311h1v1h-1zM817 316h1v1h-1zM817 321h1v1h-1zM817 326h1v1h-1zM817 331h1v1h-1zM817 336h1v1h-1zM817 341h1v1h-1zM817 346h1v1h-1zM817 351h1v1h-1zM817 356h1v1h-1zM817 361h1v1h-1zM817 366h1v1h-1zM817 371h1v1h-1zM817 376h1v1h-1zM817 381h1v1h-1zM817 386h1v1h-1zM817 391h1v1h-1zM817 396h1v1h-1zM817 401h1v1h-1zM817 406h1v1h-1zM817 411h1v1h-1zM817 416h1v1h-1zM817 421h1v1h-1zM817 426h1v1h-1zM817 431h1v1h-1zM817 436h1v1h-1zM817 441h1v1h-1zM817 446h1v1h-1zM817 451h1v1h-1zM864 135h1v1h-1zM864 140h1v1h-1zM864 145h1v1h-1zM864 150h1v1h-1zM864 155h1v1h-1zM864 160h1v1h-1zM864 165h1v1h-1zM864 170h1v1h-1zM864 175h1v1h-1zM864 180h1v1h-1zM864 185h1v1h-1zM864 190h1v1h-1zM864 195h1v1h-1zM864 200h1v1h-1zM864 205h1v1h-1zM864 210h1v1h-1zM864 215h1v1h-1zM864 220h1v1h-1zM864 225h1v1h-1zM864 230h1v1h-1zM864 235h1v1h-1zM864 240h1v1h-1zM864 245h1v1h-1zM864 250h1v1h-1zM864 255h1v1h-1zM864 260h1v1h-1zM864 265h1v1h-1zM864 270h1v1h-1zM864 276h1v1h-1zM864 281h1v1h-1zM864 286h1v1h-1zM864 291h1v1h-1zM864 296h1v1h-1zM864 301h1v1h-1zM864 306h1v1h-1zM864 311h1v1h-1zM864 316h1v1h-1zM864 321h1v1h-1zM864 326h1v1h-1zM864 331h1v1h-1zM864 336h1v1h-1zM864 341h1v1h-1zM864 346h1v1h-1zM864 351h1v1h-1zM864 356h1v1h-1zM864 361h1v1h-1zM864 366h1v1h-1zM864 371h1v1h-1zM864 376h1v1h-1zM864 381h1v1h-1zM864 386h1v1h-1zM864 391h1v1h-1zM864 396h1v1h-1zM864 401h1v1h-1zM864 406h1v1h-1zM864 411h1v1h-1zM864 416h1v1h-1zM864 421h1v1h-1zM864 426h1v1h-1zM864 431h1v1h-1zM864 436h1v1h-1zM864 441h1v1h-1zM864 446h1v1h-1zM864 451h1v1h-1zM911 135h1v1h-1zM911 140h1v1h-1zM911 145h1v1h-1zM911 150h1v1h-1zM911 155h1v1h-1zM911 160h1v1h-1zM911 165h1v1h-1zM911 170h1v1h-1zM911 175h1v1h-1zM911 180h1v1h-1zM911 185h1v1h-1zM911 190h1v1h-1zM911 195h1v1h-1zM911 200h1v1h-1zM911 205h1v1h-1zM911 210h1v1h-1zM911 215h1v1h-1zM911 220h1v1h-1zM911 225h1v1h-1zM911 230h1v1h-1zM911 235h1v1h-1zM911 240h1v1h-1zM911 245h1v1h-1zM911 250h1v1h-1zM911 255h1v1h-1zM911 260h1v1h-1zM911 265h1v1h-1zM911 270h1v1h-1zM911 276h1v1h-1zM911 281h1v1h-1zM911 286h1v1h-1zM911 291h1v1h-1zM911 296h1v1h-1zM911 301h1v1h-1zM911 306h1v1h-1zM911 311h1v1h-1zM911 316h1v1h-1zM911 321h1v1h-1zM911 326h1v1h-1zM911 331h1v1h-1zM911 336h1v1h-1zM911 341h1v1h-1zM911 346h1v1h-1zM911 351h1v1h-1zM911 356h1v1h-1zM911 361h1v1h-1zM911 366h1v1h-1zM911 371h1v1h-1zM911 376h1v1h-1zM911 381h1v1h-1zM911 386h1v1h-1zM911 391h1v1h-1zM911 396h1v1h-1zM911 401h1v1h-1zM911 406h1v1h-1zM911 411h1v1h-1zM911 416h1v1h-1zM911 421h1v1h-1zM911 426h1v1h-1zM911 431h1v1h-1zM911 436h1v1h-1zM911 441h1v1h-1zM911 446h1v1h-1zM911 451h1v1h-1zM958 135h1v1h-1zM958 140h1v1h-1zM958 145h1v1h-1zM958 150h1v1h-1zM958 155h1v1h-1zM958 160h1v1h-1zM958 165h1v1h-1zM958 170h1v1h-1zM958 175h1v1h-1zM958 180h1v1h-1zM958 185h1v1h-1zM958 190h1v1h-1zM958 195h1v1h-1zM958 200h1v1h-1zM958 205h1v1h-1zM958 210h1v1h-1zM958 215h1v1h-1zM958 220h1v1h-1zM958 225h1v1h-1zM958 230h1v1h-1zM958 235h1v1h-1zM958 240h1v1h-1zM958 245h1v1h-1zM958 250h1v1h-1zM958 255h1v1h-1zM958 260h1v1h-1zM958 265h1v1h-1zM958 270h1v1h-1zM958 276h1v1h-1zM958 281h1v1h-1zM958 286h1v1h-1zM958 291h1v1h-1zM958 296h1v1h-1zM958 301h1v1h-1zM958 306h1v1h-1zM958 311h1v1h-1zM958 316h1v1h-1zM958 321h1v1h-1zM958 326h1v1h-1zM958 331h1v1h-1zM958 336h1v1h-1zM958 341h1v1h-1zM958 346h1v1h-1zM958 351h1v1h-1zM958 356h1v1h-1zM958 361h1v1h-1zM958 366h1v1h-1zM958 371h1v1h-1zM958 376h1v1h-1zM958 381h1v1h-1zM958 386h1v1h-1zM958 391h1v1h-1zM958 396h1v1h-1zM958 401h1v1h-1zM958 406h1v1h-1zM958 411h1v1h-1zM958 416h1v1h-1zM958 421h1v1h-1zM958 426h1v1h-1zM958 431h1v1h-1zM958 436h1v1h-1zM958 441h1v1h-1zM958 446h1v1h-1zM958 451h1v1h-1zM737 467h1v1h-1zM741 467h1v1h-1zM746 467h1v1h-1zM751 467h1v1h-1zM755 467h1v1h-1zM760 467h1v1h-1zM765 467h1v1h-1zM770 467h1v1h-1zM774 467h1v1h-1zM779 467h1v1h-1zM784 467h1v1h-1zM788 467h1v1h-1zM793 467h1v1h-1zM798 467h1v1h-1zM803 467h1v1h-1zM807 467h1v1h-1zM812 467h1v1h-1zM817 467h1v1h-1zM821 467h1v1h-1zM826 467h1v1h-1zM831 467h1v1h-1zM836 467h1v1h-1zM840 467h1v1h-1zM845 467h1v1h-1zM850 467h1v1h-1zM854 467h1v1h-1zM859 467h1v1h-1zM864 467h1v1h-1zM869 467h1v1h-1zM873 467h1v1h-1zM878 467h1v1h-1zM883 467h1v1h-1zM887 467h1v1h-1zM892 467h1v1h-1zM897 467h1v1h-1zM902 467h1v1h-1zM906 467h1v1h-1zM911 467h1v1h-1zM916 467h1v1h-1zM920 467h1v1h-1zM925 467h1v1h-1zM930 467h1v1h-1zM935 467h1v1h-1zM939 467h1v1h-1zM944 467h1v1h-1zM949 467h1v1h-1zM953 467h1v1h-1zM958 467h1v1h-1zM963 467h1v1h-1zM737 507h1v1h-1zM741 507h1v1h-1zM746 507h1v1h-1zM751 507h1v1h-1zM755 507h1v1h-1zM760 507h1v1h-1zM765 507h1v1h-1zM770 507h1v1h-1zM774 507h1v1h-1zM779 507h1v1h-1zM784 507h1v1h-1zM788 507h1v1h-1zM793 507h1v1h-1zM798 507h1v1h-1zM803 507h1v1h-1zM807 507h1v1h-1zM812 507h1v1h-1zM817 507h1v1h-1zM821 507h1v1h-1zM826 507h1v1h-1zM831 507h1v1h-1zM836 507h1v1h-1zM840 507h1v1h-1zM845 507h1v1h-1zM850 507h1v1h-1zM854 507h1v1h-1zM859 507h1v1h-1zM864 507h1v1h-1zM869 507h1v1h-1zM873 507h1v1h-1zM878 507h1v1h-1zM883 507h1v1h-1zM887 507h1v1h-1zM892 507h1v1h-1zM897 507h1v1h-1zM902 507h1v1h-1zM906 507h1v1h-1zM911 507h1v1h-1zM916 507h1v1h-1zM920 507h1v1h-1zM925 507h1v1h-1zM930 507h1v1h-1zM935 507h1v1h-1zM939 507h1v1h-1zM944 507h1v1h-1zM949 507h1v1h-1zM953 507h1v1h-1zM958 507h1v1h-1zM963 507h1v1h-1zM737 547h1v1h-1zM741 547h1v1h-1zM746 547h1v1h-1zM751 547h1v1h-1zM755 547h1v1h-1zM760 547h1v1h-1zM765 547h1v1h-1zM770 547h1v1h-1zM774 547h1v1h-1zM779 547h1v1h-1zM784 547h1v1h-1zM788 547h1v1h-1zM793 547h1v1h-1zM798 547h1v1h-1zM803 547h1v1h-1zM807 547h1v1h-1zM812 547h1v1h-1zM817 547h1v1h-1zM821 547h1v1h-1zM826 547h1v1h-1zM831 547h1v1h-1zM836 547h1v1h-1zM840 547h1v1h-1zM845 547h1v1h-1zM850 547h1v1h-1zM854 547h1v1h-1zM859 547h1v1h-1zM864 547h1v1h-1zM869 547h1v1h-1zM873 547h1v1h-1zM878 547h1v1h-1zM883 547h1v1h-1zM887 547h1v1h-1zM892 547h1v1h-1zM897 547h1v1h-1zM902 547h1v1h-1zM906 547h1v1h-1zM911 547h1v1h-1zM916 547h1v1h-1zM920 547h1v1h-1zM925 547h1v1h-1zM930 547h1v1h-1zM935 547h1v1h-1zM939 547h1v1h-1zM944 547h1v1h-1zM949 547h1v1h-1zM953 547h1v1h-1zM958 547h1v1h-1zM963 547h1v1h-1zM737 587h1v1h-1zM741 587h1v1h-1zM746 587h1v1h-1zM751 587h1v1h-1zM755 587h1v1h-1zM760 587h1v1h-1zM765 587h1v1h-1zM770 587h1v1h-1zM774 587h1v1h-1zM779 587h1v1h-1zM784 587h1v1h-1zM788 587h1v1h-1zM793 587h1v1h-1zM798 587h1v1h-1zM803 587h1v1h-1zM807 587h1v1h-1zM812 587h1v1h-1zM817 587h1v1h-1zM821 587h1v1h-1zM826 587h1v1h-1zM831 587h1v1h-1zM836 587h1v1h-1zM840 587h1v1h-1zM845 587h1v1h-1zM850 587h1v1h-1zM854 587h1v1h-1zM859 587h1v1h-1zM864 587h1v1h-1zM869 587h1v1h-1zM873 587h1v1h-1zM878 587h1v1h-1zM883 587h1v1h-1zM887 587h1v1h-1zM892 587h1v1h-1zM897 587h1v1h-1zM902 587h1v1h-1zM906 587h1v1h-1zM911 587h1v1h-1zM916 587h1v1h-1zM920 587h1v1h-1zM925 587h1v1h-1zM930 587h1v1h-1zM935 587h1v1h-1zM939 587h1v1h-1zM944 587h1v1h-1zM949 587h1v1h-1zM953 587h1v1h-1zM958 587h1v1h-1zM963 587h1v1h-1zM737 627h1v1h-1zM741 627h1v1h-1zM746 627h1v1h-1zM751 627h1v1h-1zM755 627h1v1h-1zM760 627h1v1h-1zM765 627h1v1h-1zM770 627h1v1h-1zM774 627h1v1h-1zM779 627h1v1h-1zM784 627h1v1h-1zM788 627h1v1h-1zM793 627h1v1h-1zM798 627h1v1h-1zM803 627h1v1h-1zM807 627h1v1h-1zM812 627h1v1h-1zM817 627h1v1h-1zM821 627h1v1h-1zM826 627h1v1h-1zM831 627h1v1h-1zM836 627h1v1h-1zM840 627h1v1h-1zM845 627h1v1h-1zM850 627h1v1h-1zM854 627h1v1h-1zM859 627h1v1h-1zM864 627h1v1h-1zM869 627h1v1h-1zM873 627h1v1h-1zM878 627h1v1h-1zM883 627h1v1h-1zM887 627h1v1h-1zM892 627h1v1h-1zM897 627h1v1h-1zM902 627h1v1h-1zM906 627h1v1h-1zM911 627h1v1h-1zM916 627h1v1h-1zM920 627h1v1h-1zM925 627h1v1h-1zM930 627h1v1h-1zM935 627h1v1h-1zM939 627h1v1h-1zM944 627h1v1h-1zM949 627h1v1h-1zM953 627h1v1h-1zM958 627h1v1h-1zM963 627h1v1h-1zM737 667h1v1h-1zM741 667h1v1h-1zM746 667h1v1h-1zM751 667h1v1h-1zM755 667h1v1h-1zM760 667h1v1h-1zM765 667h1v1h-1zM770 667h1v1h-1zM774 667h1v1h-1zM779 667h1v1h-1zM784 667h1v1h-1zM788 667h1v1h-1zM793 667h1v1h-1zM798 667h1v1h-1zM803 667h1v1h-1zM807 667h1v1h-1zM812 667h1v1h-1zM817 667h1v1h-1zM821 667h1v1h-1zM826 667h1v1h-1zM831 667h1v1h-1zM836 667h1v1h-1zM840 667h1v1h-1zM845 667h1v1h-1zM850 667h1v1h-1zM854 667h1v1h-1zM859 667h1v1h-1zM864 667h1v1h-1zM869 667h1v1h-1zM873 667h1v1h-1zM878 667h1v1h-1zM883 667h1v1h-1zM887 667h1v1h-1zM892 667h1v1h-1zM897 667h1v1h-1zM902 667h1v1h-1zM906 667h1v1h-1zM911 667h1v1h-1zM916 667h1v1h-1zM920 667h1v1h-1zM925 667h1v1h-1zM930 667h1v1h-1zM935 667h1v1h-1zM939 667h1v1h-1zM944 667h1v1h-1zM949 667h1v1h-1zM953 667h1v1h-1zM958 667h1v1h-1zM963 667h1v1h-1zM779 467h1v1h-1zM779 472h1v1h-1zM779 477h1v1h-1zM779 482h1v1h-1zM779 487h1v1h-1zM779 492h1v1h-1zM779 497h1v1h-1zM779 502h1v1h-1zM779 507h1v1h-1zM779 512h1v1h-1zM779 517h1v1h-1zM779 522h1v1h-1zM779 527h1v1h-1zM779 532h1v1h-1zM779 537h1v1h-1zM779 542h1v1h-1zM779 547h1v1h-1zM779 552h1v1h-1zM779 557h1v1h-1zM779 562h1v1h-1zM779 567h1v1h-1zM779 572h1v1h-1zM779 577h1v1h-1zM779 582h1v1h-1zM779 587h1v1h-1zM779 592h1v1h-1zM779 597h1v1h-1zM779 602h1v1h-1zM779 607h1v1h-1zM779 612h1v1h-1zM779 617h1v1h-1zM779 622h1v1h-1zM779 627h1v1h-1zM779 632h1v1h-1zM779 637h1v1h-1zM779 642h1v1h-1zM779 647h1v1h-1zM779 652h1v1h-1zM779 657h1v1h-1zM779 662h1v1h-1zM779 667h1v1h-1zM779 672h1v1h-1zM779 677h1v1h-1zM779 682h1v1h-1zM779 687h1v1h-1zM779 692h1v1h-1zM779 697h1v1h-1zM779 702h1v1h-1zM826 467h1v1h-1zM826 472h1v1h-1zM826 477h1v1h-1zM826 482h1v1h-1zM826 487h1v1h-1zM826 492h1v1h-1zM826 497h1v1h-1zM826 502h1v1h-1zM826 507h1v1h-1zM826 512h1v1h-1zM826 517h1v1h-1zM826 522h1v1h-1zM826 527h1v1h-1zM826 532h1v1h-1zM826 537h1v1h-1zM826 542h1v1h-1zM826 547h1v1h-1zM826 552h1v1h-1zM826 557h1v1h-1zM826 562h1v1h-1zM826 567h1v1h-1zM826 572h1v1h-1zM826 577h1v1h-1zM826 582h1v1h-1zM826 587h1v1h-1zM826 592h1v1h-1zM826 597h1v1h-1zM826 602h1v1h-1zM826 607h1v1h-1zM826 612h1v1h-1zM826 617h1v1h-1zM826 622h1v1h-1zM826 627h1v1h-1zM826 632h1v1h-1zM826 637h1v1h-1zM826 642h1v1h-1zM826 647h1v1h-1zM826 652h1v1h-1zM826 657h1v1h-1zM826 662h1v1h-1zM826 667h1v1h-1zM826 672h1v1h-1zM826 677h1v1h-1zM826 682h1v1h-1zM826 687h1v1h-1zM826 692h1v1h-1zM826 697h1v1h-1zM826 702h1v1h-1zM873 467h1v1h-1zM873 472h1v1h-1zM873 477h1v1h-1zM873 482h1v1h-1zM873 487h1v1h-1zM873 492h1v1h-1zM873 497h1v1h-1zM873 502h1v1h-1zM873 507h1v1h-1zM873 512h1v1h-1zM873 517h1v1h-1zM873 522h1v1h-1zM873 527h1v1h-1zM873 532h1v1h-1zM873 537h1v1h-1zM873 542h1v1h-1zM873 547h1v1h-1zM873 552h1v1h-1zM873 557h1v1h-1zM873 562h1v1h-1zM873 567h1v1h-1zM873 572h1v1h-1zM873 577h1v1h-1zM873 582h1v1h-1zM873 587h1v1h-1zM873 592h1v1h-1zM873 597h1v1h-1zM873 602h1v1h-1zM873 607h1v1h-1zM873 612h1v1h-1zM873 617h1v1h-1zM873 622h1v1h-1zM873 627h1v1h-1zM873 632h1v1h-1zM873 637h1v1h-1zM873 642h1v1h-1zM873 647h1v1h-1zM873 652h1v1h-1zM873 657h1v1h-1zM873 662h1v1h-1zM873 667h1v1h-1zM873 672h1v1h-1zM873 677h1v1h-1zM873 682h1v1h-1zM873 687h1v1h-1zM873 692h1v1h-1zM873 697h1v1h-1zM873 702h1v1h-1zM920 467h1v1h-1zM920 472h1v1h-1zM920 477h1v1h-1zM920 482h1v1h-1zM920 487h1v1h-1zM920 492h1v1h-1zM920 497h1v1h-1zM920 502h1v1h-1zM920 507h1v1h-1zM920 512h1v1h-1zM920 517h1v1h-1zM920 522h1v1h-1zM920 527h1v1h-1zM920 532h1v1h-1zM920 537h1v1h-1zM920 542h1v1h-1zM920 547h1v1h-1zM920 552h1v1h-1zM920 557h1v1h-1zM920 562h1v1h-1zM920 567h1v1h-1zM920 572h1v1h-1zM920 577h1v1h-1zM920 582h1v1h-1zM920 587h1v1h-1zM920 592h1v1h-1zM920 597h1v1h-1zM920 602h1v1h-1zM920 607h1v1h-1zM920 612h1v1h-1zM920 617h1v1h-1zM920 622h1v1h-1zM920 627h1v1h-1zM920 632h1v1h-1zM920 637h1v1h-1zM920 642h1v1h-1zM920 647h1v1h-1zM920 652h1v1h-1zM920 657h1v1h-1zM920 662h1v1h-1zM920 667h1v1h-1zM920 672h1v1h-1zM920 677h1v1h-1zM920 682h1v1h-1zM920 687h1v1h-1zM920 692h1v1h-1zM920 697h1v1h-1zM920 702h1v1h-1z"/>
</g>
<svg id="pcx" x="381" y="114.8" width="603" height="602.06" overflow="visible" viewBox="0 0 640 480" preserveAspectRatio="none">
<text x="18.80" y="22.32" fill="#FFFFFF" stroke="#FFFFFF" font-size="8.71" textLength="53.56" lengthAdjust="spacingAndGlyphs">Processor</text>
<rect x="99.77" y="17.16" width="2.1" height="1.7" fill="#FFFFFF" shape-rendering="crispEdges"/>
<rect x="99.77" y="20.37" width="2.1" height="1.7" fill="#FFFFFF" shape-rendering="crispEdges"/>
<text x="106.58" y="22.32" fill="#FFFFFF" stroke="#FFFFFF" font-size="8.71" textLength="79.46" lengthAdjust="spacingAndGlyphs">Intel Pentium</text>
<text x="186.50" y="19.69" fill="#FFFFFF" stroke="#FFFFFF" font-size="5.44" textLength="6.65" lengthAdjust="spacingAndGlyphs">®</text>
<text x="214.31" y="22.32" fill="#FFFFFF" stroke="#FFFFFF" font-size="8.71" textLength="31.70" lengthAdjust="spacingAndGlyphs">90 MHz</text>
<text x="18.80" y="30.06" fill="#FFFFFF" stroke="#FFFFFF" font-size="8.71" textLength="70.65" lengthAdjust="spacingAndGlyphs">CPUID (TFMS)</text>
<rect x="99.77" y="24.89" width="2.1" height="1.7" fill="#FFFFFF" shape-rendering="crispEdges"/>
<rect x="99.77" y="28.1" width="2.1" height="1.7" fill="#FFFFFF" shape-rendering="crispEdges"/>
<text x="105.52" y="30.06" fill="#FFFFFF" stroke="#FFFFFF" font-size="8.71" textLength="167.23" lengthAdjust="spacingAndGlyphs">0524 Codename: P54C (0.35µm)</text>
<text x="18.80" y="37.95" fill="#FFFFFF" stroke="#FFFFFF" font-size="8.71" textLength="82.86" lengthAdjust="spacingAndGlyphs">Speed via TSC:</text>
<text x="105.31" y="37.95" fill="#FFFFFF" stroke="#FFFFFF" font-size="8.71" textLength="50.59" lengthAdjust="spacingAndGlyphs">89.99 MHz</text>
<text x="174.61" y="37.95" fill="#FFFFFF" stroke="#FFFFFF" font-size="8.71" textLength="42.21" lengthAdjust="spacingAndGlyphs">MMX™:No</text>
<text x="229.91" y="37.95" fill="#FFFFFF" stroke="#FFFFFF" font-size="8.71" textLength="49.63" lengthAdjust="spacingAndGlyphs">IA SSE:No</text>
<text x="18.80" y="54.53" fill="#FFFFFF" stroke="#FFFFFF" font-size="8.71" textLength="71.71" lengthAdjust="spacingAndGlyphs">Memory size</text>
<text x="18.80" y="61.95" fill="#FFFFFF" stroke="#FFFFFF" font-size="8.71" textLength="97.71" lengthAdjust="spacingAndGlyphs">Memory Bandwidth</text>
<rect x="195.4" y="49.37" width="2.1" height="1.7" fill="#FFFFFF" shape-rendering="crispEdges"/>
<rect x="195.4" y="52.58" width="2.1" height="1.7" fill="#FFFFFF" shape-rendering="crispEdges"/>
<rect x="195.4" y="56.78" width="2.1" height="1.7" fill="#FFFFFF" shape-rendering="crispEdges"/>
<rect x="195.4" y="60.0" width="2.1" height="1.7" fill="#FFFFFF" shape-rendering="crispEdges"/>
<text x="223.33" y="54.53" fill="#FFFFFF" stroke="#FFFFFF" font-size="8.71" textLength="26.39" lengthAdjust="spacingAndGlyphs">64 MB</text>
<text x="220.57" y="61.95" fill="#FFFFFF" stroke="#FFFFFF" font-size="8.71" textLength="56.53" lengthAdjust="spacingAndGlyphs">46.15 MB/s</text>
<text x="18.49" y="78.85" fill="#FFFFFF" stroke="#FFFFFF" font-size="8.71" textLength="67.78" lengthAdjust="spacingAndGlyphs">VESA memory</text>
<rect x="99.13" y="73.68" width="2.1" height="1.7" fill="#FFFFFF" shape-rendering="crispEdges"/>
<rect x="99.13" y="76.9" width="2.1" height="1.7" fill="#FFFFFF" shape-rendering="crispEdges"/>
<text x="108.70" y="78.85" fill="#FFFFFF" stroke="#FFFFFF" font-size="8.71" textLength="41.57" lengthAdjust="spacingAndGlyphs">Unknown</text>
<text x="18.49" y="94.63" fill="#FFFFFF" stroke="#FFFFFF" font-size="9.32" textLength="71.71" lengthAdjust="spacingAndGlyphs">Hard drive 0</text>
<rect x="99.13" y="89.11" width="2.1" height="1.7" fill="#FFFFFF" shape-rendering="crispEdges"/>
<rect x="99.13" y="92.55" width="2.1" height="1.7" fill="#FFFFFF" shape-rendering="crispEdges"/>
<text x="108.70" y="94.63" fill="#FFFFFF" stroke="#FFFFFF" font-size="9.32" textLength="65.87" lengthAdjust="spacingAndGlyphs">517C 64H 32S</text>
<text x="216.64" y="94.63" fill="#FFFFFF" stroke="#FFFFFF" font-size="9.32" textLength="33.18" lengthAdjust="spacingAndGlyphs">517 MB</text>
<text x="18.49" y="110.74" fill="#FFFFFF" stroke="#FFFFFF" font-size="9.32" textLength="59.51" lengthAdjust="spacingAndGlyphs">OS version</text>
<rect x="195.5" y="105.21" width="2.1" height="1.7" fill="#FFFFFF" shape-rendering="crispEdges"/>
<rect x="195.5" y="108.65" width="2.1" height="1.7" fill="#FFFFFF" shape-rendering="crispEdges"/>
<text x="205.60" y="110.74" fill="#FFFFFF" stroke="#FFFFFF" font-size="9.32" textLength="65.24" lengthAdjust="spacingAndGlyphs">PC-DOS 7.30</text>
<text x="18.49" y="254.96" fill="#FFFFFF" stroke="#FFFFFF" font-size="9.07" textLength="162.56" lengthAdjust="spacingAndGlyphs">System Speed Test  Ver 4.78</text>
<text x="18.49" y="270.91" fill="#FFFFFF" stroke="#FFFFFF" font-size="9.32" textLength="264.03" lengthAdjust="spacingAndGlyphs">Report file - created on 03-10-2020 17:53:28</text>
<text x="589.07" y="6.54" fill="#55FFFF" stroke="#55FFFF" font-size="9.92" textLength="48.36" lengthAdjust="spacingAndGlyphs">Ver 4.78</text>
<polyline points="312.68,114.17 338.57,114.81 343.88,114.17 363.62,114.17 372.86,121.66 400.13,121.66 402.68,121.02 409.26,121.02 420.83,129.63 450.65,129.63 462.22,139.04 491.94,139.04 503.51,151.96 528.34,151.48 539.91,162.16 558.06,162.64 571.33,173.80 587.89,173.80 593.30,179.54 604.44,185.76 612.62,186.24" fill="none" stroke="#FFFF55" stroke-width="1.05" stroke-linejoin="round"/>
<polyline points="313.42,263.73 315.75,252.89 318.09,245.32 322.65,239.26 331.89,230.65 341.12,226.26 350.25,221.08 365.21,214.22 377.84,209.52 388.25,206.41 400.88,202.58 412.44,199.15 426.24,195.17 441.21,191.42 457.23,187.75 471.03,183.45 487.16,179.06 504.36,174.92 521.66,170.45 538.85,165.91 556.15,161.76 573.35,156.82 590.65,151.64 611.87,143.67" fill="none" stroke="#FF5555" stroke-width="1.4" stroke-linejoin="round"/>
<polyline points="312.68,225.23 369.57,225.23 371.48,226.74 453.94,226.74 455.32,227.78 501.92,228.49 531.64,230.49 561.46,231.68 594.36,233.44 612.62,234.71" fill="none" stroke="#AA5500" stroke-width="1.6" stroke-linejoin="round"/>
<polyline points="312.68,255.84 315.22,255.84 316.60,251.61 402.26,251.61 476.55,251.30 529.62,250.50 612.62,249.70" fill="none" stroke="#00AA00" stroke-width="1.3" stroke-linejoin="round"/>
<text x="318.85" y="22.32" fill="#FFFFFF" stroke="#FFFFFF" font-size="8.47" textLength="27.24" lengthAdjust="spacingAndGlyphs">HDD 0</text>
<text x="562.01" y="22.32" fill="#FFFF55" stroke="#FFFF55" font-size="8.47" textLength="50.38" lengthAdjust="spacingAndGlyphs">FAST TEST</text>
<text x="318.85" y="38.43" fill="#FF5555" stroke="#FF5555" font-size="8.71" textLength="126.16" lengthAdjust="spacingAndGlyphs">Average/Max seek time</text>
<rect x="458.72" y="33.26" width="2.1" height="1.7" fill="#FF5555" shape-rendering="crispEdges"/>
<rect x="458.72" y="36.48" width="2.1" height="1.7" fill="#FF5555" shape-rendering="crispEdges"/>
<text x="478.69" y="38.43" fill="#FF5555" stroke="#FF5555" font-size="8.71" textLength="89.44" lengthAdjust="spacingAndGlyphs">13.51 / 16.01 ms</text>
<text x="318.85" y="46.98" fill="#FF55FF" stroke="#FF55FF" font-size="8.71" textLength="96.33" lengthAdjust="spacingAndGlyphs">Random seek time</text>
<rect x="458.72" y="41.82" width="2.1" height="1.7" fill="#FF55FF" shape-rendering="crispEdges"/>
<rect x="458.72" y="45.03" width="2.1" height="1.7" fill="#FF55FF" shape-rendering="crispEdges"/>
<text x="484.21" y="46.98" fill="#FF55FF" stroke="#FF55FF" font-size="8.71" textLength="37.85" lengthAdjust="spacingAndGlyphs">3.50 ms</text>
<text x="318.85" y="54.98" fill="#00AA00" stroke="#00AA00" font-size="8.71" textLength="113.74" lengthAdjust="spacingAndGlyphs">Track-to-track seek</text>
<rect x="458.72" y="49.81" width="2.1" height="1.7" fill="#00AA00" shape-rendering="crispEdges"/>
<rect x="458.72" y="53.03" width="2.1" height="1.7" fill="#00AA00" shape-rendering="crispEdges"/>
<text x="484.21" y="54.98" fill="#00AA00" stroke="#00AA00" font-size="8.71" textLength="37.85" lengthAdjust="spacingAndGlyphs">2.61 ms</text>
<text x="318.85" y="62.98" fill="#5555FF" stroke="#5555FF" font-size="8.71" textLength="108.22" lengthAdjust="spacingAndGlyphs">Random access time</text>
<rect x="458.72" y="57.81" width="2.1" height="1.7" fill="#5555FF" shape-rendering="crispEdges"/>
<rect x="458.72" y="61.02" width="2.1" height="1.7" fill="#5555FF" shape-rendering="crispEdges"/>
<text x="478.69" y="62.98" fill="#5555FF" stroke="#5555FF" font-size="8.71" textLength="43.37" lengthAdjust="spacingAndGlyphs">15.41 ms</text>
<text x="318.85" y="70.97" fill="#FF55FF" stroke="#FF55FF" font-size="8.71" textLength="113.74" lengthAdjust="spacingAndGlyphs">Buffered read speed</text>
<rect x="458.72" y="65.81" width="2.1" height="1.7" fill="#FF55FF" shape-rendering="crispEdges"/>
<rect x="458.72" y="69.02" width="2.1" height="1.7" fill="#FF55FF" shape-rendering="crispEdges"/>
<text x="484.21" y="70.97" fill="#FF55FF" stroke="#FF55FF" font-size="8.71" textLength="51.01" lengthAdjust="spacingAndGlyphs">7981 KB/s</text>
<text x="318.85" y="78.97" fill="#AA5500" stroke="#AA5500" font-size="8.71" textLength="113.74" lengthAdjust="spacingAndGlyphs">Linear verify speed</text>
<rect x="458.72" y="73.8" width="2.1" height="1.7" fill="#AA5500" shape-rendering="crispEdges"/>
<rect x="458.72" y="77.02" width="2.1" height="1.7" fill="#AA5500" shape-rendering="crispEdges"/>
<text x="484.21" y="78.97" fill="#AA5500" stroke="#AA5500" font-size="8.71" textLength="51.01" lengthAdjust="spacingAndGlyphs">1088 KB/s</text>
<text x="318.85" y="86.96" fill="#FFFF55" stroke="#FFFF55" font-size="8.71" textLength="102.07" lengthAdjust="spacingAndGlyphs">Linear read speed</text>
<rect x="458.72" y="81.8" width="2.1" height="1.7" fill="#FFFF55" shape-rendering="crispEdges"/>
<rect x="458.72" y="85.01" width="2.1" height="1.7" fill="#FFFF55" shape-rendering="crispEdges"/>
<text x="484.21" y="86.96" fill="#FFFF55" stroke="#FFFF55" font-size="8.71" textLength="51.01" lengthAdjust="spacingAndGlyphs">3265 KB/s</text>
<text x="595.02" y="46.32" fill="#FFFFFF" stroke="#FFFFFF" font-size="8.71" textLength="11.64" lengthAdjust="spacingAndGlyphs">28</text>
<text x="583.02" y="55.49" fill="#FFFFFF" stroke="#FFFFFF" font-size="8.71" textLength="23.63" lengthAdjust="spacingAndGlyphs">5600</text>
<text x="595.02" y="78.37" fill="#FFFFFF" stroke="#FFFFFF" font-size="8.71" textLength="11.64" lengthAdjust="spacingAndGlyphs">24</text>
<text x="583.02" y="87.54" fill="#FFFFFF" stroke="#FFFFFF" font-size="8.71" textLength="23.63" lengthAdjust="spacingAndGlyphs">4800</text>
<text x="595.02" y="110.42" fill="#FFFFFF" stroke="#FFFFFF" font-size="8.71" textLength="11.64" lengthAdjust="spacingAndGlyphs">20</text>
<text x="583.02" y="119.59" fill="#FFFFFF" stroke="#FFFFFF" font-size="8.71" textLength="23.63" lengthAdjust="spacingAndGlyphs">4000</text>
<text x="595.02" y="142.47" fill="#FFFFFF" stroke="#FFFFFF" font-size="8.71" textLength="11.64" lengthAdjust="spacingAndGlyphs">16</text>
<text x="583.02" y="151.64" fill="#FFFFFF" stroke="#FFFFFF" font-size="8.71" textLength="23.63" lengthAdjust="spacingAndGlyphs">3200</text>
<text x="595.02" y="174.52" fill="#FFFFFF" stroke="#FFFFFF" font-size="8.71" textLength="11.64" lengthAdjust="spacingAndGlyphs">12</text>
<text x="583.02" y="183.69" fill="#FFFFFF" stroke="#FFFFFF" font-size="8.71" textLength="23.63" lengthAdjust="spacingAndGlyphs">2400</text>
<text x="601.01" y="206.57" fill="#FFFFFF" stroke="#FFFFFF" font-size="8.71" textLength="5.64" lengthAdjust="spacingAndGlyphs">8</text>
<text x="583.02" y="215.74" fill="#FFFFFF" stroke="#FFFFFF" font-size="8.71" textLength="23.63" lengthAdjust="spacingAndGlyphs">1600</text>
<text x="601.01" y="238.62" fill="#FFFFFF" stroke="#FFFFFF" font-size="8.71" textLength="5.64" lengthAdjust="spacingAndGlyphs">4</text>
<text x="589.02" y="247.79" fill="#FFFFFF" stroke="#FFFFFF" font-size="8.71" textLength="17.63" lengthAdjust="spacingAndGlyphs">800</text>
<text x="582.60" y="262.06" fill="#FFFFFF" stroke="#FFFFFF" font-size="8.71" textLength="23.74" lengthAdjust="spacingAndGlyphs">(ms)</text>
<text x="571.03" y="269.39" fill="#FFFFFF" stroke="#FFFFFF" font-size="8.71" textLength="35.31" lengthAdjust="spacingAndGlyphs">(KB/s)</text>
<text x="320.23" y="270.43" fill="#FFFFFF" stroke="#FFFFFF" font-size="8.95" textLength="77.02" lengthAdjust="spacingAndGlyphs">Testing track</text>
<rect x="405.65" y="265.12" width="2.1" height="1.7" fill="#FFFFFF" shape-rendering="crispEdges"/>
<rect x="405.65" y="268.42" width="2.1" height="1.7" fill="#FFFFFF" shape-rendering="crispEdges"/>
<text x="432.73" y="270.43" fill="#FFFFFF" stroke="#FFFFFF" font-size="8.95" textLength="18.22" lengthAdjust="spacingAndGlyphs">516</text>
<text x="456.93" y="270.43" fill="#FFFFFF" stroke="#FFFFFF" font-size="8.95" textLength="23.74" lengthAdjust="spacingAndGlyphs">from</text>
<text x="504.16" y="270.43" fill="#FFFFFF" stroke="#FFFFFF" font-size="8.95" textLength="19.49" lengthAdjust="spacingAndGlyphs">517</text>
<text x="31.01" y="326.72" fill="#FFFFFF" stroke="#FFFFFF" font-size="9.19" textLength="30.11" lengthAdjust="spacingAndGlyphs">65.95</text>
<text x="41.84" y="303.28" fill="#55FFFF" stroke="#55FFFF" font-size="9.68" textLength="61.73" lengthAdjust="spacingAndGlyphs">Am5x86-133</text>
<text x="108.70" y="303.28" fill="#55FFFF" stroke="#55FFFF" font-size="9.68" textLength="35.84" lengthAdjust="spacingAndGlyphs">P6-200</text>
<text x="156.57" y="303.28" fill="#55FFFF" stroke="#55FFFF" font-size="9.68" textLength="78.50" lengthAdjust="spacingAndGlyphs">PentiumII-233</text>
<text x="253.15" y="303.28" fill="#55FFFF" stroke="#55FFFF" font-size="9.68" textLength="77.55" lengthAdjust="spacingAndGlyphs">PentiumII-400</text>
<text x="42.90" y="311.09" fill="#55FFFF" stroke="#55FFFF" font-size="9.44" textLength="65.66" lengthAdjust="spacingAndGlyphs">Pentium-133</text>
<text x="173.76" y="311.09" fill="#55FFFF" stroke="#55FFFF" font-size="9.44" textLength="49.10" lengthAdjust="spacingAndGlyphs">K6-2-266</text>
<text x="276.93" y="311.09" fill="#55FFFF" stroke="#55FFFF" font-size="9.44" textLength="65.98" lengthAdjust="spacingAndGlyphs">Celeron-500</text>
<text x="241.27" y="326.72" fill="#FFFFFF" stroke="#FFFFFF" font-size="9.19" textLength="112.47" lengthAdjust="spacingAndGlyphs">Processor benchmark</text>
<text x="32.60" y="342.98" fill="#55FFFF" stroke="#55FFFF" font-size="9.19" textLength="57.91" lengthAdjust="spacingAndGlyphs">i486DX2-50</text>
<text x="108.70" y="342.98" fill="#55FFFF" stroke="#55FFFF" font-size="9.19" textLength="48.04" lengthAdjust="spacingAndGlyphs">P55C-233</text>
<text x="210.70" y="342.98" fill="#55FFFF" stroke="#55FFFF" font-size="9.19" textLength="66.83" lengthAdjust="spacingAndGlyphs">Celeron-333</text>
<text x="301.13" y="342.98" fill="#55FFFF" stroke="#55FFFF" font-size="9.19" textLength="60.04" lengthAdjust="spacingAndGlyphs">Athlon-600</text>
<text x="18.80" y="350.87" fill="#55FFFF" stroke="#55FFFF" font-size="9.19" textLength="48.36" lengthAdjust="spacingAndGlyphs">386DX-40</text>
<text x="103.71" y="350.87" fill="#55FFFF" stroke="#55FFFF" font-size="9.19" textLength="58.76" lengthAdjust="spacingAndGlyphs">Cx6x86-233</text>
<text x="192.76" y="350.87" fill="#55FFFF" stroke="#55FFFF" font-size="9.19" textLength="78.19" lengthAdjust="spacingAndGlyphs">PentiumII-300</text>
<text x="299.85" y="350.87" fill="#55FFFF" stroke="#55FFFF" font-size="9.19" textLength="61.31" lengthAdjust="spacingAndGlyphs">K6-III-500</text>
<text x="25.17" y="430.36" fill="#FFFFFF" stroke="#FFFFFF" font-size="9.44" textLength="29.47" lengthAdjust="spacingAndGlyphs">73.45</text>
<text x="259.63" y="430.36" fill="#FFFFFF" stroke="#FFFFFF" font-size="9.44" textLength="95.59" lengthAdjust="spacingAndGlyphs">Hard drive speed</text>
<text x="18.49" y="407.08" fill="#55FFFF" stroke="#55FFFF" font-size="9.44" textLength="86.46" lengthAdjust="spacingAndGlyphs">SHD3062(115 MB)</text>
<text x="31.01" y="415.05" fill="#55FFFF" stroke="#55FFFF" font-size="9.44" textLength="79.67" lengthAdjust="spacingAndGlyphs">ST3491(407 MB)</text>
<text x="121.44" y="407.08" fill="#55FFFF" stroke="#55FFFF" font-size="9.44" textLength="115.76" lengthAdjust="spacingAndGlyphs">WDCAC21600H(1.51 GB)</text>
<text x="156.14" y="415.05" fill="#55FFFF" stroke="#55FFFF" font-size="9.44" textLength="109.81" lengthAdjust="spacingAndGlyphs">MPA3026AU(2.43 GB)</text>
<text x="274.06" y="407.08" fill="#55FFFF" stroke="#55FFFF" font-size="9.44" textLength="92.41" lengthAdjust="spacingAndGlyphs">QFB EX3.2A(3 GB)</text>
<text x="289.13" y="415.05" fill="#55FFFF" stroke="#55FFFF" font-size="9.44" textLength="71.82" lengthAdjust="spacingAndGlyphs">QFB Lct15 07</text>
<text x="107.96" y="446.62" fill="#55FFFF" stroke="#55FFFF" font-size="9.44" textLength="98.25" lengthAdjust="spacingAndGlyphs">ST32122A(1.96 GB)</text>
<text x="228.74" y="446.62" fill="#55FFFF" stroke="#55FFFF" font-size="9.44" textLength="109.18" lengthAdjust="spacingAndGlyphs">QFB EL5.1A(4.76 GB)</text>
<text x="72.72" y="454.68" fill="#55FFFF" stroke="#55FFFF" font-size="9.44" textLength="103.45" lengthAdjust="spacingAndGlyphs">PLS31274A(1.16 GB)</text>
<text x="217.28" y="454.68" fill="#55FFFF" stroke="#55FFFF" font-size="9.44" textLength="109.07" lengthAdjust="spacingAndGlyphs">QFB SE3.2A(3.00 GB)</text>
<polyline points="373.49,446.15 524.42,446.15 524.95,452.60 528.03,462.01 533.33,465.20 536.94,466.79 623.02,466.79" fill="none" stroke="#5555FF" stroke-width="1.3" stroke-linejoin="round"/>
<polyline points="373.49,432.43 399.60,432.43 401.51,434.74 405.01,439.21 408.62,441.84 413.40,443.67 507.12,443.91 507.65,444.71 524.42,444.71 526.43,451.81 531.21,458.10 536.41,461.29 537.47,462.01 623.02,462.01" fill="none" stroke="#FFFF55" stroke-width="1.3" stroke-linejoin="round"/>
<polyline points="373.49,354.54 375.40,352.79 384.85,351.91 386.12,350.95 399.60,350.95 400.34,367.93 402.68,396.40 406.29,414.25 409.79,424.94 413.40,429.72 500.75,429.72 501.28,430.92 506.06,431.32 506.59,431.71 517.63,431.71 518.16,432.67 524.42,432.67 525.48,451.81 528.03,460.50 532.27,464.00 536.41,466.00 623.02,466.00" fill="none" stroke="#55FF55" stroke-width="1.3" stroke-linejoin="round"/>
<text x="382.21" y="470.86" fill="#FFFFFF" stroke="#FFFFFF" font-size="9.44" textLength="4.85" lengthAdjust="spacingAndGlyphs">4</text>
<text x="410.23" y="470.86" fill="#FFFFFF" stroke="#FFFFFF" font-size="9.44" textLength="10.58" lengthAdjust="spacingAndGlyphs">16</text>
<text x="460.12" y="470.86" fill="#FFFFFF" stroke="#FFFFFF" font-size="9.44" textLength="11.43" lengthAdjust="spacingAndGlyphs">64</text>
<text x="504.70" y="470.86" fill="#FFFFFF" stroke="#FFFFFF" font-size="9.68" textLength="17.90" lengthAdjust="spacingAndGlyphs">256</text>
<rect x="550.1641791044776" y="463.4821812963406" width="23.970149253731392" height="8.378059475404598" fill="#000000" shape-rendering="crispEdges"/>
<text x="550.86" y="470.86" fill="#FFFFFF" stroke="#FFFFFF" font-size="9.68" textLength="22.57" lengthAdjust="spacingAndGlyphs">1024</text>
<rect x="597.2885572139304" y="463.4821812963406" width="25.668325041459298" height="8.378059475404598" fill="#000000" shape-rendering="crispEdges"/>
<text x="597.99" y="470.86" fill="#FFFFFF" stroke="#FFFFFF" font-size="9.68" textLength="24.27" lengthAdjust="spacingAndGlyphs">4096</text>
<text x="609.56" y="439.37" fill="#FFFFFF" stroke="#FFFFFF" font-size="10.40" textLength="12.70" lengthAdjust="spacingAndGlyphs">90</text>
<text x="604.36" y="407.80" fill="#FFFFFF" stroke="#FFFFFF" font-size="10.53" textLength="18.22" lengthAdjust="spacingAndGlyphs">180</text>
<text x="604.36" y="375.99" fill="#FFFFFF" stroke="#FFFFFF" font-size="10.40" textLength="18.22" lengthAdjust="spacingAndGlyphs">270</text>
<text x="604.68" y="343.46" fill="#FFFFFF" stroke="#FFFFFF" font-size="9.92" textLength="17.58" lengthAdjust="spacingAndGlyphs">360</text>
<text x="604.68" y="311.01" fill="#FFFFFF" stroke="#FFFFFF" font-size="9.92" textLength="17.58" lengthAdjust="spacingAndGlyphs">450</text>
<text x="540.89" y="350.95" fill="#FFFFFF" stroke="#FFFFFF" font-size="9.68" textLength="41.78" lengthAdjust="spacingAndGlyphs">Reading</text>
<text x="540.89" y="358.93" fill="#FFFFFF" stroke="#FFFFFF" font-size="9.68" textLength="41.78" lengthAdjust="spacingAndGlyphs">Writing</text>
<text x="540.89" y="366.90" fill="#FFFFFF" stroke="#FFFFFF" font-size="9.68" textLength="35.94" lengthAdjust="spacingAndGlyphs">Moving</text>
<text x="379.24" y="286.85" fill="#FFFFFF" stroke="#FFFFFF" font-size="9.19" textLength="154.92" lengthAdjust="spacingAndGlyphs">Testing extended memory...</text>
<text x="379.24" y="294.83" fill="#FFFFFF" stroke="#FFFFFF" font-size="9.19" textLength="174.03" lengthAdjust="spacingAndGlyphs">Results testing memory-timing</text>
<text x="588.22" y="294.83" fill="#FFFFFF" stroke="#FFFFFF" font-size="9.19" textLength="35.62" lengthAdjust="spacingAndGlyphs">(MB/s)</text>
<text x="379.67" y="302.80" fill="#FFFFFF" stroke="#FFFFFF" font-size="9.19" textLength="78.08" lengthAdjust="spacingAndGlyphs">Data cache L1 (</text>
<text x="478.37" y="302.80" fill="#FFFFFF" stroke="#FFFFFF" font-size="9.19" textLength="25.54" lengthAdjust="spacingAndGlyphs">8 KB)</text>
<text x="525.07" y="302.80" fill="#FFFFFF" stroke="#FFFFFF" font-size="9.19" textLength="60.89" lengthAdjust="spacingAndGlyphs">177.83 MB/s</text>
<text x="379.67" y="310.69" fill="#FFFFFF" stroke="#FFFFFF" font-size="9.19" textLength="78.08" lengthAdjust="spacingAndGlyphs">Data cache L2 (</text>
<text x="466.27" y="310.69" fill="#FFFFFF" stroke="#FFFFFF" font-size="9.19" textLength="37.64" lengthAdjust="spacingAndGlyphs">256 KB)</text>
<text x="529.32" y="310.69" fill="#FFFFFF" stroke="#FFFFFF" font-size="9.19" textLength="56.64" lengthAdjust="spacingAndGlyphs">90.31 MB/s</text>
<text x="379.67" y="319.06" fill="#FFFFFF" stroke="#FFFFFF" font-size="9.19" textLength="100.79" lengthAdjust="spacingAndGlyphs">Memory throughput</text>
<text x="529.32" y="319.06" fill="#FFFFFF" stroke="#FFFFFF" font-size="9.19" textLength="56.64" lengthAdjust="spacingAndGlyphs">23.31 MB/s</text>
<text x="577.08" y="286.85" fill="#55FF55" stroke="#55FF55" font-size="9.56" textLength="35.62" lengthAdjust="spacingAndGlyphs">PASSED</text>
</svg>
</svg>
</div></body></html>
